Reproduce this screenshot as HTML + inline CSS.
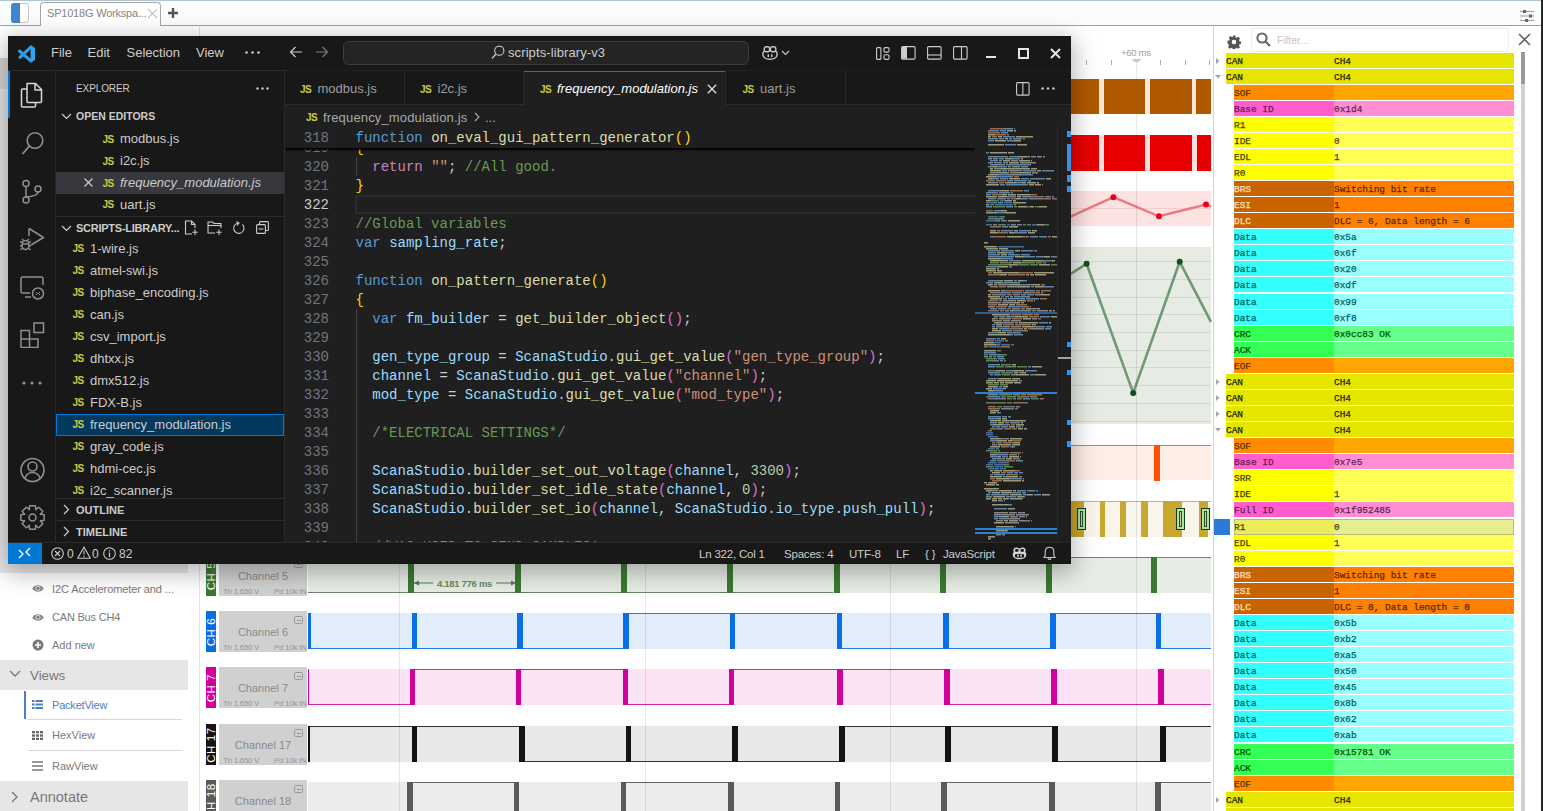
<!DOCTYPE html><html><head><meta charset="utf-8"><style>
html,body{margin:0;padding:0;width:1543px;height:811px;overflow:hidden;background:#fff;position:relative}
*{box-sizing:border-box}
.ab{position:absolute}
.t{position:absolute;white-space:nowrap;line-height:1}
</style></head><body>
<div class="ab" style="left:0;top:0;width:1543px;height:25px;background:#fbfcfd;border-top:1px solid #b0c4d8"></div>
<div class="ab" style="left:0;top:25px;width:1541px;height:1px;background:#a0a0a0"></div>
<div class="ab" style="left:11px;top:3px;width:18px;height:20px;border:1.5px solid #c4c4c4;border-radius:3px;background:#fff"></div>
<div class="ab" style="left:11px;top:3px;width:9px;height:20px;background:#3f86cf;border-radius:3px 0 0 3px"></div>
<div class="ab" style="left:40px;top:2px;width:121px;height:24px;background:#fff;border:1px solid #a8a8a8;border-bottom:none;border-radius:4px 4px 0 0"></div>
<div class="t" style="left:47px;top:7px;font:11px 'Liberation Sans',sans-serif;color:#858585;letter-spacing:-0.2px">SP1018G Workspa...</div>
<svg class="ab" style="left:147px;top:8px" width="11" height="11"><path d="M1 1L10 10M10 1L1 10" stroke="#c8c8c8" stroke-width="1.3"/></svg>
<svg class="ab" style="left:167px;top:7px" width="12" height="12"><path d="M6 1V11M1 6H11" stroke="#555" stroke-width="2.4"/></svg>
<svg class="ab" style="left:1519px;top:9px" width="16" height="14"><path d="M1 2.5H15M1 7H15M1 11.5H15" stroke="#999" stroke-width="1"/><rect x="4" y="1" width="3" height="3" fill="#666"/><rect x="10" y="5.5" width="3" height="3" fill="#666"/><rect x="6" y="10" width="3" height="3" fill="#666"/></svg>
<div class="ab" style="left:1541px;top:0;width:2px;height:811px;background:#28281e"></div>
<div class="ab" style="left:0;top:26px;width:199px;height:785px;background:#fff"></div>
<div class="ab" style="left:0;top:58px;width:8px;height:31px;background:#d6d6d6"></div>
<div class="ab" style="left:0;top:89px;width:8px;height:471px;background:#e4e4e4"></div>
<div class="ab" style="left:199px;top:26px;width:1px;height:785px;background:#e4e4e4"></div>
<div class="ab" style="left:0;top:545px;width:188px;height:28px;background:#e8e8e8"></div>
<svg class="ab" style="left:32px;top:584px" width="12" height="9"><path d="M0.3 4.5C2.5 0.3 9.5 0.3 11.7 4.5C9.5 8.7 2.5 8.7 0.3 4.5Z" fill="#8a8a8a"/><circle cx="6" cy="4.3" r="2.4" fill="#e8e8e8"/><circle cx="6" cy="4.3" r="1.5" fill="#777"/></svg>
<div class="t" style="left:52px;top:583px;font:11px 'Liberation Sans',sans-serif;color:#7a7a7a;letter-spacing:-0.1px">I2C Accelerometer and ...</div>
<svg class="ab" style="left:32px;top:613px" width="12" height="9"><path d="M0.3 4.5C2.5 0.3 9.5 0.3 11.7 4.5C9.5 8.7 2.5 8.7 0.3 4.5Z" fill="#8a8a8a"/><circle cx="6" cy="4.3" r="2.4" fill="#e8e8e8"/><circle cx="6" cy="4.3" r="1.5" fill="#777"/></svg>
<div class="t" style="left:52px;top:611px;font:11px 'Liberation Sans',sans-serif;color:#7a7a7a;letter-spacing:-0.2px">CAN Bus CH4</div>
<svg class="ab" style="left:32px;top:639px" width="12" height="12"><circle cx="6" cy="6" r="5.5" fill="#777"/><path d="M6 3V9M3 6H9" stroke="#fff" stroke-width="1.6"/></svg>
<div class="t" style="left:52px;top:639px;font:11px 'Liberation Sans',sans-serif;color:#7a7a7a">Add new</div>
<div class="ab" style="left:0;top:660px;width:188px;height:30px;background:#e6e6e6"></div>
<svg class="ab" style="left:9px;top:670px" width="12" height="8"><path d="M1 1L6 6L11 1" stroke="#777" stroke-width="1.3" fill="none"/></svg>
<div class="t" style="left:30px;top:668px;font:13.3px 'Liberation Sans',sans-serif;color:#777">Views</div>
<div class="ab" style="left:24px;top:691px;width:2px;height:28px;background:#4a80c0"></div>
<svg class="ab" style="left:32px;top:700px" width="11" height="9"><g fill="#4a7fc0"><rect x="0" y="0" width="2.5" height="2"/><rect x="3.5" y="0" width="7.5" height="2"/><rect x="0" y="3.5" width="2.5" height="2"/><rect x="3.5" y="3.5" width="7.5" height="2"/><rect x="0" y="7" width="2.5" height="2"/><rect x="3.5" y="7" width="7.5" height="2"/></g></svg>
<div class="t" style="left:52px;top:699px;font:11px 'Liberation Sans',sans-serif;color:#4b7fbd;letter-spacing:-0.2px">PacketView</div>
<div class="ab" style="left:28px;top:719px;width:154px;height:1px;background:#d8d8d8"></div>
<svg class="ab" style="left:32px;top:731px" width="11" height="9"><g fill="#666"><rect x="0" y="0" width="3" height="2.3"/><rect x="4" y="0" width="3" height="2.3"/><rect x="8" y="0" width="3" height="2.3"/><rect x="0" y="3.4" width="3" height="2.3"/><rect x="4" y="3.4" width="3" height="2.3"/><rect x="8" y="3.4" width="3" height="2.3"/><rect x="0" y="6.7" width="3" height="2.3"/><rect x="4" y="6.7" width="3" height="2.3"/><rect x="8" y="6.7" width="3" height="2.3"/></g></svg>
<div class="t" style="left:52px;top:729px;font:11px 'Liberation Sans',sans-serif;color:#7a7a7a">HexView</div>
<div class="ab" style="left:28px;top:750px;width:154px;height:1px;background:#d8d8d8"></div>
<svg class="ab" style="left:32px;top:761px" width="11" height="10"><path d="M0 1H11M0 5H11M0 9H11" stroke="#777" stroke-width="1.6"/></svg>
<div class="t" style="left:52px;top:760px;font:11px 'Liberation Sans',sans-serif;color:#7a7a7a">RawView</div>
<div class="ab" style="left:0;top:781px;width:188px;height:30px;background:#e6e6e6"></div>
<svg class="ab" style="left:11px;top:791px" width="8" height="12"><path d="M1 1L6 6L1 11" stroke="#777" stroke-width="1.3" fill="none"/></svg>
<div class="t" style="left:30px;top:789px;font:14.5px 'Liberation Sans',sans-serif;color:#777">Annotate</div>
<div class="ab" style="left:1213px;top:26px;width:1px;height:785px;background:#d4d4d4"></div>
<div class="t" style="left:1121px;top:47px;font:9.5px 'Liberation Sans',sans-serif;color:#9a9a9a;letter-spacing:-0.3px">+60 ms</div>
<div class="ab" style="left:1086px;top:60px;width:1px;height:5px;background:#aaa"></div>
<div class="ab" style="left:1111px;top:60px;width:1px;height:5px;background:#aaa"></div>
<div class="ab" style="left:1160px;top:60px;width:1px;height:5px;background:#aaa"></div>
<div class="ab" style="left:1185px;top:60px;width:1px;height:5px;background:#aaa"></div>
<div class="ab" style="left:1209px;top:60px;width:1px;height:5px;background:#aaa"></div>
<svg class="ab" style="left:1131px;top:59px" width="11" height="5"><path d="M0 0H11L5.5 4Z" fill="#c8c8c8"/></svg>
<div class="ab" style="left:1050px;top:79px;width:161px;height:35px;background:#fde7d6"></div>
<div class="ab" style="left:1050px;top:79px;width:49px;height:35px;background:#b05800"></div>
<div class="ab" style="left:1104px;top:79px;width:41px;height:35px;background:#b05800"></div>
<div class="ab" style="left:1150px;top:79px;width:42px;height:35px;background:#b05800"></div>
<div class="ab" style="left:1196px;top:79px;width:15px;height:35px;background:#b05800"></div>
<div class="ab" style="left:1050px;top:135px;width:161px;height:36px;background:#fde0de"></div>
<div class="ab" style="left:1050px;top:135px;width:49px;height:36px;background:#e80000"></div>
<div class="ab" style="left:1104px;top:135px;width:41px;height:36px;background:#e80000"></div>
<div class="ab" style="left:1150px;top:135px;width:42px;height:36px;background:#e80000"></div>
<div class="ab" style="left:1197px;top:135px;width:14px;height:36px;background:#e80000"></div>
<div class="ab" style="left:308px;top:191px;width:903px;height:35px;background:#fde2e2"></div>
<div class="ab" style="left:308px;top:208px;width:903px;height:1px;background:#f3cccc"></div>
<svg class="ab" style="left:1040px;top:185px" width="175" height="45"><polyline points="25,34.2 73.4,12.2 119,31.3 166,19.5 171,21.5" fill="none" stroke="#ea7a80" stroke-width="2.5"/><circle cx="73.4" cy="12.2" r="3" fill="#e8001a"/><circle cx="119" cy="31.3" r="3" fill="#e8001a"/><circle cx="166" cy="19.5" r="3" fill="#e8001a"/></svg>
<div class="ab" style="left:308px;top:247px;width:903px;height:177px;background:#e6ebe3"></div>
<div class="ab" style="left:308px;top:261px;width:903px;height:1px;background:#d2d8cf"></div>
<div class="ab" style="left:308px;top:279px;width:903px;height:1px;background:#d2d8cf"></div>
<div class="ab" style="left:308px;top:297px;width:903px;height:1px;background:#d2d8cf"></div>
<div class="ab" style="left:308px;top:314px;width:903px;height:1px;background:#d2d8cf"></div>
<div class="ab" style="left:308px;top:332px;width:903px;height:1px;background:#d2d8cf"></div>
<div class="ab" style="left:308px;top:350px;width:903px;height:1px;background:#d2d8cf"></div>
<div class="ab" style="left:308px;top:367px;width:903px;height:1px;background:#d2d8cf"></div>
<div class="ab" style="left:308px;top:385px;width:903px;height:1px;background:#d2d8cf"></div>
<div class="ab" style="left:308px;top:403px;width:903px;height:1px;background:#d2d8cf"></div>
<div class="ab" style="left:308px;top:421px;width:903px;height:1px;background:#d2d8cf"></div>
<svg class="ab" style="left:1040px;top:240px" width="175" height="180"><polyline points="0,53.6 46.6,23.7 93.2,153 139.7,21.8 171,81.8" fill="none" stroke="#709a72" stroke-width="2.6"/><circle cx="46.6" cy="23.7" r="3" fill="#10501e"/><circle cx="93.2" cy="153" r="3" fill="#10501e"/><circle cx="139.7" cy="21.8" r="3" fill="#10501e"/></svg>
<div class="ab" style="left:308px;top:445px;width:903px;height:35px;background:#fdede4"></div>
<div class="ab" style="left:308px;top:445px;width:903px;height:1px;background:#f07838"></div>
<div class="ab" style="left:1154px;top:445px;width:6px;height:36px;background:#ff5000"></div>
<div class="ab" style="left:308px;top:501px;width:903px;height:36px;background:#f9f5ea"></div>
<div class="ab" style="left:308px;top:501px;width:903px;height:1px;background:#bdb28a"></div>
<div class="ab" style="left:1050px;top:501px;width:34px;height:36px;background:#c8a72e"></div>
<div class="ab" style="left:1100px;top:501px;width:5px;height:36px;background:#c8a72e"></div>
<div class="ab" style="left:1120px;top:501px;width:6px;height:36px;background:#c8a72e"></div>
<div class="ab" style="left:1141px;top:501px;width:7px;height:36px;background:#c8a72e"></div>
<div class="ab" style="left:1163px;top:501px;width:19px;height:36px;background:#c8a72e"></div>
<div class="ab" style="left:1199px;top:501px;width:9px;height:36px;background:#c8a72e"></div>
<div class="ab" style="left:1077px;top:508px;width:9px;height:22px;border:1.5px solid #123d12;background:#a8e6a0"></div>
<div class="ab" style="left:1080px;top:511px;width:3px;height:16px;border:1px solid #2a4a2a;background:#d8c8a0"></div>
<div class="ab" style="left:1176px;top:508px;width:9px;height:22px;border:1.5px solid #123d12;background:#a8e6a0"></div>
<div class="ab" style="left:1179px;top:511px;width:3px;height:16px;border:1px solid #2a4a2a;background:#d8c8a0"></div>
<div class="ab" style="left:1201px;top:508px;width:9px;height:22px;border:1.5px solid #123d12;background:#a8e6a0"></div>
<div class="ab" style="left:1204px;top:511px;width:3px;height:16px;border:1px solid #2a4a2a;background:#d8c8a0"></div>
<div class="ab" style="left:206px;top:555px;width:10px;height:41px;background:#3a7a30;overflow:hidden"><div class="t" style="left:-16px;top:14.5px;width:42px;text-align:center;transform:rotate(-90deg);font:11.5px 'Liberation Sans',sans-serif;color:#fff;letter-spacing:0.6px">CH 5</div></div>
<div class="ab" style="left:219px;top:555px;width:88px;height:41px;background:#d0d0d0;overflow:hidden"><div class="t" style="left:0;width:88px;text-align:center;top:15px;font:11px 'Liberation Sans',sans-serif;color:#8a8a8a">Channel 5</div><div class="t" style="left:4px;top:32px;font:8px 'Liberation Sans',sans-serif;color:#999;letter-spacing:-0.3px">Th 1.650 V</div><div class="t" style="left:55px;top:32px;font:8px 'Liberation Sans',sans-serif;color:#999;letter-spacing:-0.3px">Pd 10k IN</div><div class="ab" style="left:75px;top:5px;width:9px;height:8px;border:1px solid #999;border-radius:1.5px"><div class="ab" style="left:1.5px;top:3px;width:4px;height:1px;background:#999"></div></div></div>
<div class="ab" style="left:308px;top:557px;width:903px;height:36px;background:#e7ece5"></div>
<div class="ab" style="left:308px;top:592px;width:99.80000000000001px;height:1.2px;background:#6f806d"></div>
<div class="ab" style="left:407.8px;top:592px;width:107.49999999999994px;height:1.2px;background:#6f806d"></div>
<div class="ab" style="left:515.3px;top:592px;width:105.60000000000002px;height:1.2px;background:#6f806d"></div>
<div class="ab" style="left:620.9px;top:592px;width:106.30000000000007px;height:1.2px;background:#6f806d"></div>
<div class="ab" style="left:727.2px;top:592px;width:106.29999999999995px;height:1.2px;background:#6f806d"></div>
<div class="ab" style="left:833.5px;top:557px;width:106.5px;height:1.2px;background:#6f806d"></div>
<div class="ab" style="left:940px;top:557px;width:106.29999999999995px;height:1.2px;background:#6f806d"></div>
<div class="ab" style="left:1046.3px;top:557px;width:104.5px;height:1.2px;background:#6f806d"></div>
<div class="ab" style="left:1150.8px;top:557px;width:60.200000000000045px;height:1.2px;background:#6f806d"></div>
<div class="ab" style="left:407.8px;top:557px;width:6px;height:36px;background:#3a7a30"></div>
<div class="ab" style="left:515.3px;top:557px;width:6px;height:36px;background:#3a7a30"></div>
<div class="ab" style="left:620.9px;top:557px;width:6px;height:36px;background:#3a7a30"></div>
<div class="ab" style="left:727.2px;top:557px;width:6px;height:36px;background:#3a7a30"></div>
<div class="ab" style="left:833.5px;top:557px;width:6px;height:36px;background:#3a7a30"></div>
<div class="ab" style="left:940px;top:557px;width:6px;height:36px;background:#3a7a30"></div>
<div class="ab" style="left:1046.3px;top:557px;width:6px;height:36px;background:#3a7a30"></div>
<div class="ab" style="left:1150.8px;top:557px;width:6px;height:36px;background:#3a7a30"></div>
<div class="ab" style="left:206px;top:611px;width:10px;height:41px;background:#0a6ee6;overflow:hidden"><div class="t" style="left:-16px;top:14.5px;width:42px;text-align:center;transform:rotate(-90deg);font:11.5px 'Liberation Sans',sans-serif;color:#fff;letter-spacing:0.6px">CH 6</div></div>
<div class="ab" style="left:219px;top:611px;width:88px;height:41px;background:#d0d0d0;overflow:hidden"><div class="t" style="left:0;width:88px;text-align:center;top:15px;font:11px 'Liberation Sans',sans-serif;color:#8a8a8a">Channel 6</div><div class="t" style="left:4px;top:32px;font:8px 'Liberation Sans',sans-serif;color:#999;letter-spacing:-0.3px">Th 1.650 V</div><div class="t" style="left:55px;top:32px;font:8px 'Liberation Sans',sans-serif;color:#999;letter-spacing:-0.3px">Pd 10k IN</div><div class="ab" style="left:75px;top:5px;width:9px;height:8px;border:1px solid #999;border-radius:1.5px"><div class="ab" style="left:1.5px;top:3px;width:4px;height:1px;background:#999"></div></div></div>
<div class="ab" style="left:308px;top:613px;width:903px;height:36px;background:#e2edfb"></div>
<div class="ab" style="left:308px;top:648px;width:103.5px;height:1.2px;background:#2b7de0"></div>
<div class="ab" style="left:411.5px;top:648px;width:105.79999999999995px;height:1.2px;background:#2b7de0"></div>
<div class="ab" style="left:517.3px;top:648px;width:105.70000000000005px;height:1.2px;background:#2b7de0"></div>
<div class="ab" style="left:623px;top:613px;width:106.60000000000002px;height:1.2px;background:#2b7de0"></div>
<div class="ab" style="left:729.6px;top:613px;width:106.89999999999998px;height:1.2px;background:#2b7de0"></div>
<div class="ab" style="left:836.5px;top:648px;width:106.5px;height:1.2px;background:#2b7de0"></div>
<div class="ab" style="left:943px;top:648px;width:107px;height:1.2px;background:#2b7de0"></div>
<div class="ab" style="left:1050px;top:613px;width:105.5px;height:1.2px;background:#2b7de0"></div>
<div class="ab" style="left:1155.5px;top:648px;width:55.5px;height:1.2px;background:#2b7de0"></div>
<div class="ab" style="left:411.5px;top:613px;width:5.5px;height:36px;background:#0a6ee6"></div>
<div class="ab" style="left:517.3px;top:613px;width:5.5px;height:36px;background:#0a6ee6"></div>
<div class="ab" style="left:623px;top:613px;width:5.5px;height:36px;background:#0a6ee6"></div>
<div class="ab" style="left:729.6px;top:613px;width:5.5px;height:36px;background:#0a6ee6"></div>
<div class="ab" style="left:836.5px;top:613px;width:5.5px;height:36px;background:#0a6ee6"></div>
<div class="ab" style="left:943px;top:613px;width:5.5px;height:36px;background:#0a6ee6"></div>
<div class="ab" style="left:1050px;top:613px;width:5.5px;height:36px;background:#0a6ee6"></div>
<div class="ab" style="left:1155.5px;top:613px;width:5.5px;height:36px;background:#0a6ee6"></div>
<div class="ab" style="left:308px;top:613px;width:3px;height:36px;background:#0a6ee6"></div>
<div class="ab" style="left:206px;top:667px;width:10px;height:41px;background:#d2009f;overflow:hidden"><div class="t" style="left:-16px;top:14.5px;width:42px;text-align:center;transform:rotate(-90deg);font:11.5px 'Liberation Sans',sans-serif;color:#fff;letter-spacing:0.6px">CH 7</div></div>
<div class="ab" style="left:219px;top:667px;width:88px;height:41px;background:#d0d0d0;overflow:hidden"><div class="t" style="left:0;width:88px;text-align:center;top:15px;font:11px 'Liberation Sans',sans-serif;color:#8a8a8a">Channel 7</div><div class="t" style="left:4px;top:32px;font:8px 'Liberation Sans',sans-serif;color:#999;letter-spacing:-0.3px">Th 1.650 V</div><div class="t" style="left:55px;top:32px;font:8px 'Liberation Sans',sans-serif;color:#999;letter-spacing:-0.3px">Pd 10k IN</div><div class="ab" style="left:75px;top:5px;width:9px;height:8px;border:1px solid #999;border-radius:1.5px"><div class="ab" style="left:1.5px;top:3px;width:4px;height:1px;background:#999"></div></div></div>
<div class="ab" style="left:308px;top:669px;width:903px;height:36px;background:#fae3f5"></div>
<div class="ab" style="left:308px;top:704px;width:101.5px;height:1.2px;background:#cf27a7"></div>
<div class="ab" style="left:409.5px;top:669px;width:106.0px;height:1.2px;background:#cf27a7"></div>
<div class="ab" style="left:515.5px;top:669px;width:107.0px;height:1.2px;background:#cf27a7"></div>
<div class="ab" style="left:622.5px;top:704px;width:106.79999999999995px;height:1.2px;background:#cf27a7"></div>
<div class="ab" style="left:729.3px;top:669px;width:108.10000000000002px;height:1.2px;background:#cf27a7"></div>
<div class="ab" style="left:837.4px;top:669px;width:107.0px;height:1.2px;background:#cf27a7"></div>
<div class="ab" style="left:944.4px;top:704px;width:107.00000000000011px;height:1.2px;background:#cf27a7"></div>
<div class="ab" style="left:1051.4px;top:704px;width:107.0px;height:1.2px;background:#cf27a7"></div>
<div class="ab" style="left:1158.4px;top:704px;width:52.59999999999991px;height:1.2px;background:#cf27a7"></div>
<div class="ab" style="left:409.5px;top:669px;width:5.2px;height:36px;background:#d2009f"></div>
<div class="ab" style="left:515.5px;top:669px;width:5.2px;height:36px;background:#d2009f"></div>
<div class="ab" style="left:622.5px;top:669px;width:5.2px;height:36px;background:#d2009f"></div>
<div class="ab" style="left:729.3px;top:669px;width:5.2px;height:36px;background:#d2009f"></div>
<div class="ab" style="left:837.4px;top:669px;width:5.2px;height:36px;background:#d2009f"></div>
<div class="ab" style="left:944.4px;top:669px;width:5.2px;height:36px;background:#d2009f"></div>
<div class="ab" style="left:1051.4px;top:669px;width:5.2px;height:36px;background:#d2009f"></div>
<div class="ab" style="left:1158.4px;top:669px;width:5.2px;height:36px;background:#d2009f"></div>
<div class="ab" style="left:308px;top:669px;width:1.2px;height:36px;background:#d2009f"></div>
<div class="ab" style="left:206px;top:724px;width:10px;height:41px;background:#141414;overflow:hidden"><div class="t" style="left:-16px;top:14.5px;width:42px;text-align:center;transform:rotate(-90deg);font:11.5px 'Liberation Sans',sans-serif;color:#fff;letter-spacing:0.6px">CH 17</div></div>
<div class="ab" style="left:219px;top:724px;width:88px;height:41px;background:#d0d0d0;overflow:hidden"><div class="t" style="left:0;width:88px;text-align:center;top:15px;font:11px 'Liberation Sans',sans-serif;color:#8a8a8a">Channel 17</div><div class="t" style="left:4px;top:32px;font:8px 'Liberation Sans',sans-serif;color:#999;letter-spacing:-0.3px">Th 1.650 V</div><div class="t" style="left:55px;top:32px;font:8px 'Liberation Sans',sans-serif;color:#999;letter-spacing:-0.3px">Pd 10k IN</div><div class="ab" style="left:75px;top:5px;width:9px;height:8px;border:1px solid #999;border-radius:1.5px"><div class="ab" style="left:1.5px;top:3px;width:4px;height:1px;background:#999"></div></div></div>
<div class="ab" style="left:308px;top:726px;width:903px;height:36px;background:#e8e8e8"></div>
<div class="ab" style="left:308px;top:726px;width:103.5px;height:1.2px;background:#333"></div>
<div class="ab" style="left:411.5px;top:726px;width:107.5px;height:1.2px;background:#333"></div>
<div class="ab" style="left:519px;top:761px;width:106.60000000000002px;height:1.2px;background:#333"></div>
<div class="ab" style="left:625.6px;top:761px;width:106.69999999999993px;height:1.2px;background:#333"></div>
<div class="ab" style="left:732.3px;top:761px;width:106.60000000000002px;height:1.2px;background:#333"></div>
<div class="ab" style="left:838.9px;top:726px;width:106.39999999999998px;height:1.2px;background:#333"></div>
<div class="ab" style="left:945.3px;top:726px;width:107.0px;height:1.2px;background:#333"></div>
<div class="ab" style="left:1052.3px;top:761px;width:107.60000000000014px;height:1.2px;background:#333"></div>
<div class="ab" style="left:1159.9px;top:726px;width:51.09999999999991px;height:1.2px;background:#333"></div>
<div class="ab" style="left:411.5px;top:726px;width:5.7px;height:36px;background:#141414"></div>
<div class="ab" style="left:519px;top:726px;width:5.7px;height:36px;background:#141414"></div>
<div class="ab" style="left:625.6px;top:726px;width:5.7px;height:36px;background:#141414"></div>
<div class="ab" style="left:732.3px;top:726px;width:5.7px;height:36px;background:#141414"></div>
<div class="ab" style="left:838.9px;top:726px;width:5.7px;height:36px;background:#141414"></div>
<div class="ab" style="left:945.3px;top:726px;width:5.7px;height:36px;background:#141414"></div>
<div class="ab" style="left:1052.3px;top:726px;width:5.7px;height:36px;background:#141414"></div>
<div class="ab" style="left:1159.9px;top:726px;width:5.7px;height:36px;background:#141414"></div>
<div class="ab" style="left:308px;top:726px;width:1.5px;height:36px;background:#141414"></div>
<div class="ab" style="left:206px;top:780px;width:10px;height:41px;background:#5a5a5a;overflow:hidden"><div class="t" style="left:-16px;top:14.5px;width:42px;text-align:center;transform:rotate(-90deg);font:11.5px 'Liberation Sans',sans-serif;color:#fff;letter-spacing:0.6px">CH 18</div></div>
<div class="ab" style="left:219px;top:780px;width:88px;height:41px;background:#d0d0d0;overflow:hidden"><div class="t" style="left:0;width:88px;text-align:center;top:15px;font:11px 'Liberation Sans',sans-serif;color:#8a8a8a">Channel 18</div><div class="t" style="left:4px;top:32px;font:8px 'Liberation Sans',sans-serif;color:#999;letter-spacing:-0.3px">Th 1.650 V</div><div class="t" style="left:55px;top:32px;font:8px 'Liberation Sans',sans-serif;color:#999;letter-spacing:-0.3px">Pd 10k IN</div><div class="ab" style="left:75px;top:5px;width:9px;height:8px;border:1px solid #999;border-radius:1.5px"><div class="ab" style="left:1.5px;top:3px;width:4px;height:1px;background:#999"></div></div></div>
<div class="ab" style="left:308px;top:782px;width:903px;height:36px;background:#ececec"></div>
<div class="ab" style="left:308px;top:817px;width:99.30000000000001px;height:1.2px;background:#666"></div>
<div class="ab" style="left:407.3px;top:782px;width:106.49999999999994px;height:1.2px;background:#666"></div>
<div class="ab" style="left:513.8px;top:817px;width:107.30000000000007px;height:1.2px;background:#666"></div>
<div class="ab" style="left:621.1px;top:782px;width:107.29999999999995px;height:1.2px;background:#666"></div>
<div class="ab" style="left:728.4px;top:817px;width:106.60000000000002px;height:1.2px;background:#666"></div>
<div class="ab" style="left:835px;top:817px;width:106.39999999999998px;height:1.2px;background:#666"></div>
<div class="ab" style="left:941.4px;top:782px;width:107.89999999999998px;height:1.2px;background:#666"></div>
<div class="ab" style="left:1049.3px;top:817px;width:106.10000000000014px;height:1.2px;background:#666"></div>
<div class="ab" style="left:1155.4px;top:782px;width:55.59999999999991px;height:1.2px;background:#666"></div>
<div class="ab" style="left:407.3px;top:782px;width:5.4px;height:36px;background:#5a5a5a"></div>
<div class="ab" style="left:513.8px;top:782px;width:5.4px;height:36px;background:#5a5a5a"></div>
<div class="ab" style="left:621.1px;top:782px;width:5.4px;height:36px;background:#5a5a5a"></div>
<div class="ab" style="left:728.4px;top:782px;width:5.4px;height:36px;background:#5a5a5a"></div>
<div class="ab" style="left:835px;top:782px;width:5.4px;height:36px;background:#5a5a5a"></div>
<div class="ab" style="left:941.4px;top:782px;width:5.4px;height:36px;background:#5a5a5a"></div>
<div class="ab" style="left:1049.3px;top:782px;width:5.4px;height:36px;background:#5a5a5a"></div>
<div class="ab" style="left:1155.4px;top:782px;width:5.4px;height:36px;background:#5a5a5a"></div>
<div class="ab" style="left:399px;top:64px;width:1px;height:15px;background:rgba(0,0,0,0.09)"></div>
<div class="ab" style="left:399px;top:114px;width:1px;height:21px;background:rgba(0,0,0,0.09)"></div>
<div class="ab" style="left:399px;top:171px;width:1px;height:640px;background:rgba(0,0,0,0.09)"></div>
<div class="ab" style="left:645px;top:64px;width:1px;height:15px;background:rgba(0,0,0,0.09)"></div>
<div class="ab" style="left:645px;top:114px;width:1px;height:21px;background:rgba(0,0,0,0.09)"></div>
<div class="ab" style="left:645px;top:171px;width:1px;height:640px;background:rgba(0,0,0,0.09)"></div>
<div class="ab" style="left:890px;top:64px;width:1px;height:15px;background:rgba(0,0,0,0.09)"></div>
<div class="ab" style="left:890px;top:114px;width:1px;height:21px;background:rgba(0,0,0,0.09)"></div>
<div class="ab" style="left:890px;top:171px;width:1px;height:640px;background:rgba(0,0,0,0.09)"></div>
<div class="ab" style="left:1136px;top:64px;width:1px;height:15px;background:rgba(0,0,0,0.09)"></div>
<div class="ab" style="left:1136px;top:114px;width:1px;height:21px;background:rgba(0,0,0,0.09)"></div>
<div class="ab" style="left:1136px;top:171px;width:1px;height:640px;background:rgba(0,0,0,0.09)"></div>
<svg class="ab" style="left:413px;top:578px" width="104" height="10"><path d="M1 5H20M83 5H103" stroke="#4d7a4d" stroke-width="1"/><path d="M1 5L6 2.5V7.5Z M103 5L98 2.5V7.5Z" fill="#4d7a4d"/></svg>
<div class="t" style="left:437px;top:578px;font:bold 9.5px 'Liberation Sans',sans-serif;color:#668a66;letter-spacing:-0.3px">4.181 776 ms</div>
<div class="ab" style="left:1214px;top:26px;width:327px;height:785px;background:#fff"></div>
<svg class="ab" style="left:1227px;top:34.5px" width="14" height="14" viewBox="0 0 16 16"><path fill="#555" d="M6.6 0.5h2.8l0.4 2.1 1.3 0.6 1.8-1.2 2 2-1.2 1.8 0.6 1.3 2.1 0.4v2.8l-2.1 0.4-0.6 1.3 1.2 1.8-2 2-1.8-1.2-1.3 0.6-0.4 2.1H6.6l-0.4-2.1-1.3-0.6-1.8 1.2-2-2 1.2-1.8-0.6-1.3L0.5 9.4V6.6l2.1-0.4 0.6-1.3L2 3.1l2-2 1.8 1.2 1.3-0.6z"/><circle cx="8" cy="8" r="2.6" fill="#fff"/></svg>
<div class="ab" style="left:1251px;top:28px;width:258px;height:24px;border:1px solid #eeeeee;border-radius:2px;background:#fff"></div>
<svg class="ab" style="left:1256px;top:32px" width="15" height="15"><circle cx="6" cy="6" r="4.6" stroke="#666" stroke-width="2" fill="none"/><path d="M9.5 9.5L14 14" stroke="#666" stroke-width="2.2"/></svg>
<div class="t" style="left:1277px;top:34px;font:10.5px 'Liberation Sans',sans-serif;color:#c4c4c4">Filter...</div>
<svg class="ab" style="left:1518px;top:33px" width="13" height="13"><path d="M1 1L12 12M12 1L1 12" stroke="#666" stroke-width="1.6"/></svg>
<div class="ab" style="left:1521px;top:52px;width:4px;height:759px;background:#d0d0d0"></div>
<div class="ab" style="left:1521px;top:52px;width:4px;height:32px;background:#999"></div>
<svg class="ab" style="left:1216px;top:57.50px" width="7" height="7"><path d="M0 0L3.5 3L0 6Z" fill="#a4a4b0"/></svg>
<div class="ab" style="left:1226px;top:52.50px;width:108px;height:15px;background:#e5e500"></div>
<div class="ab" style="left:1334px;top:52.50px;width:180px;height:15px;background:#e5e500"></div>
<div class="t" style="left:1226px;top:55.50px;font:9.45px 'Liberation Mono',monospace;color:#1e1e00;-webkit-text-stroke:0.25px #1e1e00">CAN</div>
<div class="t" style="left:1334px;top:55.50px;font:9.45px 'Liberation Mono',monospace;color:#1e1e00;-webkit-text-stroke:0.25px #1e1e00">CH4</div>
<svg class="ab" style="left:1215px;top:74.57px" width="7" height="7"><path d="M0 0H6L3 3.5Z" fill="#a4a4b0"/></svg>
<div class="ab" style="left:1226px;top:68.57px;width:108px;height:15px;background:#e5e500"></div>
<div class="ab" style="left:1334px;top:68.57px;width:180px;height:15px;background:#e5e500"></div>
<div class="t" style="left:1226px;top:71.57px;font:9.45px 'Liberation Mono',monospace;color:#1e1e00;-webkit-text-stroke:0.25px #1e1e00">CAN</div>
<div class="t" style="left:1334px;top:71.57px;font:9.45px 'Liberation Mono',monospace;color:#1e1e00;-webkit-text-stroke:0.25px #1e1e00">CH4</div>
<div class="ab" style="left:1234px;top:84.64px;width:100px;height:15px;background:#ff8c00"></div>
<div class="ab" style="left:1334px;top:84.64px;width:180px;height:15px;background:#ffa500"></div>
<div class="t" style="left:1234px;top:87.64px;font:9.45px 'Liberation Mono',monospace;color:#553300;-webkit-text-stroke:0.25px #553300">SOF</div>
<div class="ab" style="left:1234px;top:100.71px;width:100px;height:15px;background:#ff5ccc"></div>
<div class="ab" style="left:1334px;top:100.71px;width:180px;height:15px;background:#ff8fd2"></div>
<div class="t" style="left:1234px;top:103.71px;font:9.45px 'Liberation Mono',monospace;color:#661f55;-webkit-text-stroke:0.25px #661f55">Base ID</div>
<div class="t" style="left:1334px;top:103.71px;font:9.45px 'Liberation Mono',monospace;color:#661f55;-webkit-text-stroke:0.25px #661f55">0x1d4</div>
<div class="ab" style="left:1234px;top:116.78px;width:100px;height:15px;background:#ffff00"></div>
<div class="ab" style="left:1334px;top:116.78px;width:180px;height:15px;background:#ffff55"></div>
<div class="t" style="left:1234px;top:119.78px;font:9.45px 'Liberation Mono',monospace;color:#444400;-webkit-text-stroke:0.25px #444400">R1</div>
<div class="ab" style="left:1234px;top:132.85px;width:100px;height:15px;background:#ffff00"></div>
<div class="ab" style="left:1334px;top:132.85px;width:180px;height:15px;background:#ffff55"></div>
<div class="t" style="left:1234px;top:135.85px;font:9.45px 'Liberation Mono',monospace;color:#444400;-webkit-text-stroke:0.25px #444400">IDE</div>
<div class="t" style="left:1334px;top:135.85px;font:9.45px 'Liberation Mono',monospace;color:#444400;-webkit-text-stroke:0.25px #444400">0</div>
<div class="ab" style="left:1234px;top:148.92px;width:100px;height:15px;background:#ffff00"></div>
<div class="ab" style="left:1334px;top:148.92px;width:180px;height:15px;background:#ffff55"></div>
<div class="t" style="left:1234px;top:151.92px;font:9.45px 'Liberation Mono',monospace;color:#444400;-webkit-text-stroke:0.25px #444400">EDL</div>
<div class="t" style="left:1334px;top:151.92px;font:9.45px 'Liberation Mono',monospace;color:#444400;-webkit-text-stroke:0.25px #444400">1</div>
<div class="ab" style="left:1234px;top:164.99px;width:100px;height:15px;background:#ffff00"></div>
<div class="ab" style="left:1334px;top:164.99px;width:180px;height:15px;background:#ffff55"></div>
<div class="t" style="left:1234px;top:167.99px;font:9.45px 'Liberation Mono',monospace;color:#444400;-webkit-text-stroke:0.25px #444400">R0</div>
<div class="ab" style="left:1234px;top:181.06px;width:100px;height:15px;background:#c86400"></div>
<div class="ab" style="left:1334px;top:181.06px;width:180px;height:15px;background:#ff8000"></div>
<div class="t" style="left:1234px;top:184.06px;font:9.45px 'Liberation Mono',monospace;color:#ffe0c0;-webkit-text-stroke:0.25px #ffe0c0">BRS</div>
<div class="t" style="left:1334px;top:184.06px;font:9.45px 'Liberation Mono',monospace;color:#5a2a00;-webkit-text-stroke:0.25px #5a2a00">Switching bit rate</div>
<div class="ab" style="left:1234px;top:197.13px;width:100px;height:15px;background:#c86400"></div>
<div class="ab" style="left:1334px;top:197.13px;width:180px;height:15px;background:#ff8000"></div>
<div class="t" style="left:1234px;top:200.13px;font:9.45px 'Liberation Mono',monospace;color:#ffe0c0;-webkit-text-stroke:0.25px #ffe0c0">ESI</div>
<div class="t" style="left:1334px;top:200.13px;font:9.45px 'Liberation Mono',monospace;color:#5a2a00;-webkit-text-stroke:0.25px #5a2a00">1</div>
<div class="ab" style="left:1234px;top:213.20px;width:100px;height:15px;background:#c86400"></div>
<div class="ab" style="left:1334px;top:213.20px;width:180px;height:15px;background:#ff8000"></div>
<div class="t" style="left:1234px;top:216.20px;font:9.45px 'Liberation Mono',monospace;color:#ffe0c0;-webkit-text-stroke:0.25px #ffe0c0">DLC</div>
<div class="t" style="left:1334px;top:216.20px;font:9.45px 'Liberation Mono',monospace;color:#5a2a00;-webkit-text-stroke:0.25px #5a2a00">DLC = 6, Data length = 6</div>
<div class="ab" style="left:1234px;top:229.27px;width:100px;height:15px;background:#33ffff"></div>
<div class="ab" style="left:1334px;top:229.27px;width:180px;height:15px;background:#99ffff"></div>
<div class="t" style="left:1234px;top:232.27px;font:9.45px 'Liberation Mono',monospace;color:#005f5f;-webkit-text-stroke:0.25px #005f5f">Data</div>
<div class="t" style="left:1334px;top:232.27px;font:9.45px 'Liberation Mono',monospace;color:#005f5f;-webkit-text-stroke:0.25px #005f5f">0x5a</div>
<div class="ab" style="left:1234px;top:245.34px;width:100px;height:15px;background:#33ffff"></div>
<div class="ab" style="left:1334px;top:245.34px;width:180px;height:15px;background:#99ffff"></div>
<div class="t" style="left:1234px;top:248.34px;font:9.45px 'Liberation Mono',monospace;color:#005f5f;-webkit-text-stroke:0.25px #005f5f">Data</div>
<div class="t" style="left:1334px;top:248.34px;font:9.45px 'Liberation Mono',monospace;color:#005f5f;-webkit-text-stroke:0.25px #005f5f">0x6f</div>
<div class="ab" style="left:1234px;top:261.41px;width:100px;height:15px;background:#33ffff"></div>
<div class="ab" style="left:1334px;top:261.41px;width:180px;height:15px;background:#99ffff"></div>
<div class="t" style="left:1234px;top:264.41px;font:9.45px 'Liberation Mono',monospace;color:#005f5f;-webkit-text-stroke:0.25px #005f5f">Data</div>
<div class="t" style="left:1334px;top:264.41px;font:9.45px 'Liberation Mono',monospace;color:#005f5f;-webkit-text-stroke:0.25px #005f5f">0x20</div>
<div class="ab" style="left:1234px;top:277.48px;width:100px;height:15px;background:#33ffff"></div>
<div class="ab" style="left:1334px;top:277.48px;width:180px;height:15px;background:#99ffff"></div>
<div class="t" style="left:1234px;top:280.48px;font:9.45px 'Liberation Mono',monospace;color:#005f5f;-webkit-text-stroke:0.25px #005f5f">Data</div>
<div class="t" style="left:1334px;top:280.48px;font:9.45px 'Liberation Mono',monospace;color:#005f5f;-webkit-text-stroke:0.25px #005f5f">0xdf</div>
<div class="ab" style="left:1234px;top:293.55px;width:100px;height:15px;background:#33ffff"></div>
<div class="ab" style="left:1334px;top:293.55px;width:180px;height:15px;background:#99ffff"></div>
<div class="t" style="left:1234px;top:296.55px;font:9.45px 'Liberation Mono',monospace;color:#005f5f;-webkit-text-stroke:0.25px #005f5f">Data</div>
<div class="t" style="left:1334px;top:296.55px;font:9.45px 'Liberation Mono',monospace;color:#005f5f;-webkit-text-stroke:0.25px #005f5f">0x99</div>
<div class="ab" style="left:1234px;top:309.62px;width:100px;height:15px;background:#33ffff"></div>
<div class="ab" style="left:1334px;top:309.62px;width:180px;height:15px;background:#99ffff"></div>
<div class="t" style="left:1234px;top:312.62px;font:9.45px 'Liberation Mono',monospace;color:#005f5f;-webkit-text-stroke:0.25px #005f5f">Data</div>
<div class="t" style="left:1334px;top:312.62px;font:9.45px 'Liberation Mono',monospace;color:#005f5f;-webkit-text-stroke:0.25px #005f5f">0xf8</div>
<div class="ab" style="left:1234px;top:325.69px;width:100px;height:15px;background:#33ff55"></div>
<div class="ab" style="left:1334px;top:325.69px;width:180px;height:15px;background:#66ff8c"></div>
<div class="t" style="left:1234px;top:328.69px;font:9.45px 'Liberation Mono',monospace;color:#005500;-webkit-text-stroke:0.25px #005500">CRC</div>
<div class="t" style="left:1334px;top:328.69px;font:9.45px 'Liberation Mono',monospace;color:#005500;-webkit-text-stroke:0.25px #005500">0x0cc83 OK</div>
<div class="ab" style="left:1234px;top:341.76px;width:100px;height:15px;background:#33ff55"></div>
<div class="ab" style="left:1334px;top:341.76px;width:180px;height:15px;background:#66ff8c"></div>
<div class="t" style="left:1234px;top:344.76px;font:9.45px 'Liberation Mono',monospace;color:#005500;-webkit-text-stroke:0.25px #005500">ACK</div>
<div class="ab" style="left:1234px;top:357.83px;width:100px;height:15px;background:#ff8c00"></div>
<div class="ab" style="left:1334px;top:357.83px;width:180px;height:15px;background:#ffa500"></div>
<div class="t" style="left:1234px;top:360.83px;font:9.45px 'Liberation Mono',monospace;color:#553300;-webkit-text-stroke:0.25px #553300">EOF</div>
<svg class="ab" style="left:1216px;top:378.90px" width="7" height="7"><path d="M0 0L3.5 3L0 6Z" fill="#a4a4b0"/></svg>
<div class="ab" style="left:1226px;top:373.90px;width:108px;height:15px;background:#e5e500"></div>
<div class="ab" style="left:1334px;top:373.90px;width:180px;height:15px;background:#e5e500"></div>
<div class="t" style="left:1226px;top:376.90px;font:9.45px 'Liberation Mono',monospace;color:#1e1e00;-webkit-text-stroke:0.25px #1e1e00">CAN</div>
<div class="t" style="left:1334px;top:376.90px;font:9.45px 'Liberation Mono',monospace;color:#1e1e00;-webkit-text-stroke:0.25px #1e1e00">CH4</div>
<svg class="ab" style="left:1216px;top:394.97px" width="7" height="7"><path d="M0 0L3.5 3L0 6Z" fill="#a4a4b0"/></svg>
<div class="ab" style="left:1226px;top:389.97px;width:108px;height:15px;background:#e5e500"></div>
<div class="ab" style="left:1334px;top:389.97px;width:180px;height:15px;background:#e5e500"></div>
<div class="t" style="left:1226px;top:392.97px;font:9.45px 'Liberation Mono',monospace;color:#1e1e00;-webkit-text-stroke:0.25px #1e1e00">CAN</div>
<div class="t" style="left:1334px;top:392.97px;font:9.45px 'Liberation Mono',monospace;color:#1e1e00;-webkit-text-stroke:0.25px #1e1e00">CH4</div>
<svg class="ab" style="left:1216px;top:411.04px" width="7" height="7"><path d="M0 0L3.5 3L0 6Z" fill="#a4a4b0"/></svg>
<div class="ab" style="left:1226px;top:406.04px;width:108px;height:15px;background:#e5e500"></div>
<div class="ab" style="left:1334px;top:406.04px;width:180px;height:15px;background:#e5e500"></div>
<div class="t" style="left:1226px;top:409.04px;font:9.45px 'Liberation Mono',monospace;color:#1e1e00;-webkit-text-stroke:0.25px #1e1e00">CAN</div>
<div class="t" style="left:1334px;top:409.04px;font:9.45px 'Liberation Mono',monospace;color:#1e1e00;-webkit-text-stroke:0.25px #1e1e00">CH4</div>
<svg class="ab" style="left:1215px;top:428.11px" width="7" height="7"><path d="M0 0H6L3 3.5Z" fill="#a4a4b0"/></svg>
<div class="ab" style="left:1226px;top:422.11px;width:108px;height:15px;background:#e5e500"></div>
<div class="ab" style="left:1334px;top:422.11px;width:180px;height:15px;background:#e5e500"></div>
<div class="t" style="left:1226px;top:425.11px;font:9.45px 'Liberation Mono',monospace;color:#1e1e00;-webkit-text-stroke:0.25px #1e1e00">CAN</div>
<div class="t" style="left:1334px;top:425.11px;font:9.45px 'Liberation Mono',monospace;color:#1e1e00;-webkit-text-stroke:0.25px #1e1e00">CH4</div>
<div class="ab" style="left:1234px;top:438.18px;width:100px;height:15px;background:#ff8c00"></div>
<div class="ab" style="left:1334px;top:438.18px;width:180px;height:15px;background:#ffa500"></div>
<div class="t" style="left:1234px;top:441.18px;font:9.45px 'Liberation Mono',monospace;color:#553300;-webkit-text-stroke:0.25px #553300">SOF</div>
<div class="ab" style="left:1234px;top:454.25px;width:100px;height:15px;background:#ff5ccc"></div>
<div class="ab" style="left:1334px;top:454.25px;width:180px;height:15px;background:#ff8fd2"></div>
<div class="t" style="left:1234px;top:457.25px;font:9.45px 'Liberation Mono',monospace;color:#661f55;-webkit-text-stroke:0.25px #661f55">Base ID</div>
<div class="t" style="left:1334px;top:457.25px;font:9.45px 'Liberation Mono',monospace;color:#661f55;-webkit-text-stroke:0.25px #661f55">0x7e5</div>
<div class="ab" style="left:1234px;top:470.32px;width:100px;height:15px;background:#ffff00"></div>
<div class="ab" style="left:1334px;top:470.32px;width:180px;height:15px;background:#ffff55"></div>
<div class="t" style="left:1234px;top:473.32px;font:9.45px 'Liberation Mono',monospace;color:#444400;-webkit-text-stroke:0.25px #444400">SRR</div>
<div class="ab" style="left:1234px;top:486.39px;width:100px;height:15px;background:#ffff00"></div>
<div class="ab" style="left:1334px;top:486.39px;width:180px;height:15px;background:#ffff55"></div>
<div class="t" style="left:1234px;top:489.39px;font:9.45px 'Liberation Mono',monospace;color:#444400;-webkit-text-stroke:0.25px #444400">IDE</div>
<div class="t" style="left:1334px;top:489.39px;font:9.45px 'Liberation Mono',monospace;color:#444400;-webkit-text-stroke:0.25px #444400">1</div>
<div class="ab" style="left:1234px;top:502.46px;width:100px;height:15px;background:#ff5ccc"></div>
<div class="ab" style="left:1334px;top:502.46px;width:180px;height:15px;background:#ff8fd2"></div>
<div class="t" style="left:1234px;top:505.46px;font:9.45px 'Liberation Mono',monospace;color:#661f55;-webkit-text-stroke:0.25px #661f55">Full ID</div>
<div class="t" style="left:1334px;top:505.46px;font:9.45px 'Liberation Mono',monospace;color:#661f55;-webkit-text-stroke:0.25px #661f55">0x1f952485</div>
<div class="ab" style="left:1234px;top:518.53px;width:100px;height:15px;background:#ecec5a"></div>
<div class="ab" style="left:1334px;top:518.53px;width:180px;height:15px;background:#e6ee90"></div>
<div class="t" style="left:1234px;top:521.53px;font:9.45px 'Liberation Mono',monospace;color:#444400;-webkit-text-stroke:0.25px #444400">R1</div>
<div class="t" style="left:1334px;top:521.53px;font:9.45px 'Liberation Mono',monospace;color:#444400;-webkit-text-stroke:0.25px #444400">0</div>
<div class="ab" style="left:1234px;top:534.60px;width:100px;height:15px;background:#ffff00"></div>
<div class="ab" style="left:1334px;top:534.60px;width:180px;height:15px;background:#ffff55"></div>
<div class="t" style="left:1234px;top:537.60px;font:9.45px 'Liberation Mono',monospace;color:#444400;-webkit-text-stroke:0.25px #444400">EDL</div>
<div class="t" style="left:1334px;top:537.60px;font:9.45px 'Liberation Mono',monospace;color:#444400;-webkit-text-stroke:0.25px #444400">1</div>
<div class="ab" style="left:1234px;top:550.67px;width:100px;height:15px;background:#ffff00"></div>
<div class="ab" style="left:1334px;top:550.67px;width:180px;height:15px;background:#ffff55"></div>
<div class="t" style="left:1234px;top:553.67px;font:9.45px 'Liberation Mono',monospace;color:#444400;-webkit-text-stroke:0.25px #444400">R0</div>
<div class="ab" style="left:1234px;top:566.74px;width:100px;height:15px;background:#c86400"></div>
<div class="ab" style="left:1334px;top:566.74px;width:180px;height:15px;background:#ff8000"></div>
<div class="t" style="left:1234px;top:569.74px;font:9.45px 'Liberation Mono',monospace;color:#ffe0c0;-webkit-text-stroke:0.25px #ffe0c0">BRS</div>
<div class="t" style="left:1334px;top:569.74px;font:9.45px 'Liberation Mono',monospace;color:#5a2a00;-webkit-text-stroke:0.25px #5a2a00">Switching bit rate</div>
<div class="ab" style="left:1234px;top:582.81px;width:100px;height:15px;background:#c86400"></div>
<div class="ab" style="left:1334px;top:582.81px;width:180px;height:15px;background:#ff8000"></div>
<div class="t" style="left:1234px;top:585.81px;font:9.45px 'Liberation Mono',monospace;color:#ffe0c0;-webkit-text-stroke:0.25px #ffe0c0">ESI</div>
<div class="t" style="left:1334px;top:585.81px;font:9.45px 'Liberation Mono',monospace;color:#5a2a00;-webkit-text-stroke:0.25px #5a2a00">1</div>
<div class="ab" style="left:1234px;top:598.88px;width:100px;height:15px;background:#c86400"></div>
<div class="ab" style="left:1334px;top:598.88px;width:180px;height:15px;background:#ff8000"></div>
<div class="t" style="left:1234px;top:601.88px;font:9.45px 'Liberation Mono',monospace;color:#ffe0c0;-webkit-text-stroke:0.25px #ffe0c0">DLC</div>
<div class="t" style="left:1334px;top:601.88px;font:9.45px 'Liberation Mono',monospace;color:#5a2a00;-webkit-text-stroke:0.25px #5a2a00">DLC = 8, Data length = 8</div>
<div class="ab" style="left:1234px;top:614.95px;width:100px;height:15px;background:#33ffff"></div>
<div class="ab" style="left:1334px;top:614.95px;width:180px;height:15px;background:#99ffff"></div>
<div class="t" style="left:1234px;top:617.95px;font:9.45px 'Liberation Mono',monospace;color:#005f5f;-webkit-text-stroke:0.25px #005f5f">Data</div>
<div class="t" style="left:1334px;top:617.95px;font:9.45px 'Liberation Mono',monospace;color:#005f5f;-webkit-text-stroke:0.25px #005f5f">0x5b</div>
<div class="ab" style="left:1234px;top:631.02px;width:100px;height:15px;background:#33ffff"></div>
<div class="ab" style="left:1334px;top:631.02px;width:180px;height:15px;background:#99ffff"></div>
<div class="t" style="left:1234px;top:634.02px;font:9.45px 'Liberation Mono',monospace;color:#005f5f;-webkit-text-stroke:0.25px #005f5f">Data</div>
<div class="t" style="left:1334px;top:634.02px;font:9.45px 'Liberation Mono',monospace;color:#005f5f;-webkit-text-stroke:0.25px #005f5f">0xb2</div>
<div class="ab" style="left:1234px;top:647.09px;width:100px;height:15px;background:#33ffff"></div>
<div class="ab" style="left:1334px;top:647.09px;width:180px;height:15px;background:#99ffff"></div>
<div class="t" style="left:1234px;top:650.09px;font:9.45px 'Liberation Mono',monospace;color:#005f5f;-webkit-text-stroke:0.25px #005f5f">Data</div>
<div class="t" style="left:1334px;top:650.09px;font:9.45px 'Liberation Mono',monospace;color:#005f5f;-webkit-text-stroke:0.25px #005f5f">0xa5</div>
<div class="ab" style="left:1234px;top:663.16px;width:100px;height:15px;background:#33ffff"></div>
<div class="ab" style="left:1334px;top:663.16px;width:180px;height:15px;background:#99ffff"></div>
<div class="t" style="left:1234px;top:666.16px;font:9.45px 'Liberation Mono',monospace;color:#005f5f;-webkit-text-stroke:0.25px #005f5f">Data</div>
<div class="t" style="left:1334px;top:666.16px;font:9.45px 'Liberation Mono',monospace;color:#005f5f;-webkit-text-stroke:0.25px #005f5f">0x50</div>
<div class="ab" style="left:1234px;top:679.23px;width:100px;height:15px;background:#33ffff"></div>
<div class="ab" style="left:1334px;top:679.23px;width:180px;height:15px;background:#99ffff"></div>
<div class="t" style="left:1234px;top:682.23px;font:9.45px 'Liberation Mono',monospace;color:#005f5f;-webkit-text-stroke:0.25px #005f5f">Data</div>
<div class="t" style="left:1334px;top:682.23px;font:9.45px 'Liberation Mono',monospace;color:#005f5f;-webkit-text-stroke:0.25px #005f5f">0x45</div>
<div class="ab" style="left:1234px;top:695.30px;width:100px;height:15px;background:#33ffff"></div>
<div class="ab" style="left:1334px;top:695.30px;width:180px;height:15px;background:#99ffff"></div>
<div class="t" style="left:1234px;top:698.30px;font:9.45px 'Liberation Mono',monospace;color:#005f5f;-webkit-text-stroke:0.25px #005f5f">Data</div>
<div class="t" style="left:1334px;top:698.30px;font:9.45px 'Liberation Mono',monospace;color:#005f5f;-webkit-text-stroke:0.25px #005f5f">0x8b</div>
<div class="ab" style="left:1234px;top:711.37px;width:100px;height:15px;background:#33ffff"></div>
<div class="ab" style="left:1334px;top:711.37px;width:180px;height:15px;background:#99ffff"></div>
<div class="t" style="left:1234px;top:714.37px;font:9.45px 'Liberation Mono',monospace;color:#005f5f;-webkit-text-stroke:0.25px #005f5f">Data</div>
<div class="t" style="left:1334px;top:714.37px;font:9.45px 'Liberation Mono',monospace;color:#005f5f;-webkit-text-stroke:0.25px #005f5f">0x62</div>
<div class="ab" style="left:1234px;top:727.44px;width:100px;height:15px;background:#33ffff"></div>
<div class="ab" style="left:1334px;top:727.44px;width:180px;height:15px;background:#99ffff"></div>
<div class="t" style="left:1234px;top:730.44px;font:9.45px 'Liberation Mono',monospace;color:#005f5f;-webkit-text-stroke:0.25px #005f5f">Data</div>
<div class="t" style="left:1334px;top:730.44px;font:9.45px 'Liberation Mono',monospace;color:#005f5f;-webkit-text-stroke:0.25px #005f5f">0xab</div>
<div class="ab" style="left:1234px;top:743.51px;width:100px;height:15px;background:#33ff55"></div>
<div class="ab" style="left:1334px;top:743.51px;width:180px;height:15px;background:#66ff8c"></div>
<div class="t" style="left:1234px;top:746.51px;font:9.45px 'Liberation Mono',monospace;color:#005500;-webkit-text-stroke:0.25px #005500">CRC</div>
<div class="t" style="left:1334px;top:746.51px;font:9.45px 'Liberation Mono',monospace;color:#005500;-webkit-text-stroke:0.25px #005500">0x15781 OK</div>
<div class="ab" style="left:1234px;top:759.58px;width:100px;height:15px;background:#33ff55"></div>
<div class="ab" style="left:1334px;top:759.58px;width:180px;height:15px;background:#66ff8c"></div>
<div class="t" style="left:1234px;top:762.58px;font:9.45px 'Liberation Mono',monospace;color:#005500;-webkit-text-stroke:0.25px #005500">ACK</div>
<div class="ab" style="left:1234px;top:775.65px;width:100px;height:15px;background:#ff8c00"></div>
<div class="ab" style="left:1334px;top:775.65px;width:180px;height:15px;background:#ffa500"></div>
<div class="t" style="left:1234px;top:778.65px;font:9.45px 'Liberation Mono',monospace;color:#553300;-webkit-text-stroke:0.25px #553300">EOF</div>
<svg class="ab" style="left:1216px;top:796.72px" width="7" height="7"><path d="M0 0L3.5 3L0 6Z" fill="#a4a4b0"/></svg>
<div class="ab" style="left:1226px;top:791.72px;width:108px;height:15px;background:#e5e500"></div>
<div class="ab" style="left:1334px;top:791.72px;width:180px;height:15px;background:#e5e500"></div>
<div class="t" style="left:1226px;top:794.72px;font:9.45px 'Liberation Mono',monospace;color:#1e1e00;-webkit-text-stroke:0.25px #1e1e00">CAN</div>
<div class="t" style="left:1334px;top:794.72px;font:9.45px 'Liberation Mono',monospace;color:#1e1e00;-webkit-text-stroke:0.25px #1e1e00">CH4</div>
<svg class="ab" style="left:1216px;top:812.79px" width="7" height="7"><path d="M0 0L3.5 3L0 6Z" fill="#a4a4b0"/></svg>
<div class="ab" style="left:1226px;top:807.79px;width:108px;height:15px;background:#e5e500"></div>
<div class="ab" style="left:1334px;top:807.79px;width:180px;height:15px;background:#e5e500"></div>
<div class="t" style="left:1226px;top:810.79px;font:9.45px 'Liberation Mono',monospace;color:#1e1e00;-webkit-text-stroke:0.25px #1e1e00">CAN</div>
<div class="t" style="left:1334px;top:810.79px;font:9.45px 'Liberation Mono',monospace;color:#1e1e00;-webkit-text-stroke:0.25px #1e1e00">CH4</div>
<div class="ab" style="left:1214px;top:519px;width:16px;height:16px;background:#2a7ad8"></div>
<div class="ab" style="left:1234px;top:518.5px;width:280px;height:16px;border:1px solid #b4bc78"></div>
<div class="ab" style="left:8px;top:36px;width:1063px;height:528px;background:#181818;box-shadow:0 6px 22px 3px rgba(0,0,0,0.29);overflow:hidden">
<div class="ab" style="left:0px;top:34px;width:1063px;height:1px;background:#2b2b2b;"></div><svg class="ab" style="left:9.5px;top:8.799999999999997px" width="18" height="18" viewBox="0 0 18 18"><path d="M1.5 6L13 16M2 12.3L13 1.8" stroke="#2f9be6" stroke-width="3" stroke-linecap="round"/><path d="M12.6 0.8L16 2.2Q17 2.7 17 3.8V14.2Q17 15.3 16 15.8L12.6 17.2Z" fill="#2aa6f5"/></svg><div class="t" style="left:43px;top:9px;font:13px 'Liberation Sans',sans-serif;color:#cccccc;">File</div><div class="t" style="left:79.5px;top:9px;font:13px 'Liberation Sans',sans-serif;color:#cccccc;">Edit</div><div class="t" style="left:118.5px;top:9px;font:13px 'Liberation Sans',sans-serif;color:#cccccc;">Selection</div><div class="t" style="left:188px;top:9px;font:13px 'Liberation Sans',sans-serif;color:#cccccc;">View</div><svg class="ab" style="left:237px;top:15px" width="15" height="3"><circle cx="1.5" cy="1.5" r="1.3" fill="#ccc"/><circle cx="7.5" cy="1.5" r="1.3" fill="#ccc"/><circle cx="13.5" cy="1.5" r="1.3" fill="#ccc"/></svg><svg class="ab" style="left:281px;top:10px" width="14" height="12"><path d="M13 6H1.5M6.5 1L1.5 6L6.5 11" stroke="#cccccc" stroke-width="1.2" fill="none"/></svg><svg class="ab" style="left:307px;top:10px" width="14" height="12"><path d="M1 6H12.5M7.5 1L12.5 6L7.5 11" stroke="#7a7a7a" stroke-width="1.2" fill="none"/></svg><div class="ab" style="left:335px;top:5px;width:406px;height:24px;background:#242424;border:1px solid #3c3c3c;border-radius:6px"></div><svg class="ab" style="left:483px;top:9px" width="14" height="15"><circle cx="8.3" cy="5.7" r="4.6" stroke="#cccccc" stroke-width="1.1" fill="none"/><path d="M5 9L1 13.5" stroke="#cccccc" stroke-width="1.2"/></svg><div class="t" style="left:500px;top:9px;font:13px 'Liberation Sans',sans-serif;color:#cccccc;letter-spacing:0.1px">scripts-library-v3</div><svg class="ab" style="left:754px;top:10px" width="16.0" height="14.0" viewBox="0 0 16 14"><rect x="2.2" y="0.8" width="5.4" height="5" rx="2" stroke="#cccccc" stroke-width="1.4" fill="none"/><rect x="8.4" y="0.8" width="5.4" height="5" rx="2" stroke="#cccccc" stroke-width="1.4" fill="none"/><path d="M2.2 5.2Q0.6 6.5 0.9 9Q1.6 13.2 8 13.2Q14.4 13.2 15.1 9Q15.4 6.5 13.8 5.2" stroke="#cccccc" stroke-width="1.4" fill="none"/><path d="M6.3 8.2V11M9.7 8.2V11" stroke="#cccccc" stroke-width="1.5"/></svg><svg class="ab" style="left:773px;top:14px" width="9" height="6"><path d="M1 1L4.5 4.5L8 1" stroke="#cccccc" stroke-width="1.1" fill="none"/></svg><svg class="ab" style="left:868px;top:11px" width="14" height="13"><rect x="0.6" y="0.6" width="4.3" height="11.8" rx="1" stroke="#ccc" stroke-width="1.1" fill="none"/><rect x="8" y="0.6" width="5" height="4.5" rx="1.2" stroke="#ccc" stroke-width="1.1" fill="none"/><rect x="8" y="7.8" width="5" height="4.6" rx="1.2" stroke="#ccc" stroke-width="1.1" fill="none"/></svg><svg class="ab" style="left:893px;top:10px" width="15" height="14"><rect x="0.6" y="0.6" width="13.5" height="12.5" rx="1.2" stroke="#ccc" stroke-width="1.1" fill="none"/><rect x="1" y="1" width="5" height="11.7" fill="#ccc"/></svg><svg class="ab" style="left:919px;top:10px" width="15" height="14"><rect x="0.6" y="0.6" width="13.5" height="12.5" rx="1.2" stroke="#ccc" stroke-width="1.1" fill="none"/><path d="M1 9H14" stroke="#ccc" stroke-width="1.1"/></svg><svg class="ab" style="left:945px;top:10px" width="15" height="14"><rect x="0.6" y="0.6" width="13.5" height="12.5" rx="1.2" stroke="#ccc" stroke-width="1.1" fill="none"/><path d="M8.5 1V13" stroke="#ccc" stroke-width="1.1"/></svg><div class="ab" style="left:978px;top:20px;width:10px;height:2px;background:#e6e6e6;"></div><svg class="ab" style="left:1010px;top:12px" width="11" height="11"><rect x="1" y="1" width="9" height="9" stroke="#e6e6e6" stroke-width="2" fill="none"/></svg><svg class="ab" style="left:1042px;top:12px" width="11" height="11"><path d="M1 1L10 10M10 1L1 10" stroke="#e6e6e6" stroke-width="2"/></svg><div class="ab" style="left:47px;top:34px;width:1px;height:473px;background:#2b2b2b;"></div><div class="ab" style="left:0px;top:35px;width:2px;height:47px;background:#0078d4;"></div><svg class="ab" style="left:12px;top:46px" width="24" height="26" viewBox="0 0 24 26"><path d="M7 1.5H15.5L21.5 7.5V19.5Q21.5 20.5 20.5 20.5H8Q7 20.5 7 19.5Z M15 1.5V8H21.5" stroke="#d7d7d7" stroke-width="1.5" fill="none" stroke-linejoin="round"/><path d="M7 7H2.5Q1.5 7 1.5 8V24Q1.5 25 2.5 25H14.5Q15.5 25 15.5 24V20.5" stroke="#d7d7d7" stroke-width="1.5" fill="none" stroke-linejoin="round"/></svg><svg class="ab" style="left:13px;top:95px" width="24" height="25"><circle cx="14" cy="9.5" r="7.8" stroke="#909090" stroke-width="1.6" fill="none"/><path d="M8.5 15L1.5 23" stroke="#909090" stroke-width="1.8"/></svg><svg class="ab" style="left:13px;top:143px" width="22" height="26"><circle cx="5" cy="4.5" r="3" stroke="#909090" stroke-width="1.5" fill="none"/><circle cx="5" cy="21" r="3" stroke="#909090" stroke-width="1.5" fill="none"/><circle cx="17" cy="10" r="3" stroke="#909090" stroke-width="1.5" fill="none"/><path d="M5 7.5V18M17 13Q17 17 5 18" stroke="#909090" stroke-width="1.5" fill="none"/></svg><svg class="ab" style="left:11px;top:191px" width="26" height="25"><path d="M10 1.5L24.5 10.5L12 18" stroke="#909090" stroke-width="1.5" fill="none" stroke-linejoin="round"/><path d="M10 1.5V9" stroke="#909090" stroke-width="1.5"/><ellipse cx="6.5" cy="18" rx="3.5" ry="4.5" stroke="#909090" stroke-width="1.5" fill="none"/><path d="M1 15H3M10 15H12M1 19H3M10 19H12M1.5 23L3.5 21M11.5 23L9.5 21M4.5 13.5L3 12M8.5 13.5L10 12M3 17H10" stroke="#909090" stroke-width="1.3"/></svg><svg class="ab" style="left:12px;top:240px" width="25" height="24"><path d="M10 17H2.5Q1 17 1 15.5V2.5Q1 1 2.5 1H21.5Q23 1 23 2.5V9" stroke="#909090" stroke-width="1.5" fill="none"/><path d="M5 21H11" stroke="#909090" stroke-width="1.5"/><circle cx="18" cy="17.5" r="5.5" stroke="#909090" stroke-width="1.5" fill="none"/><path d="M16 16L17.5 17.5L16 19M20 16L18.5 17.5L20 19" stroke="#909090" stroke-width="1" fill="none"/></svg><svg class="ab" style="left:12px;top:286px" width="25" height="26"><path d="M1 8.5H9.5V17H18V25.5H1Z M1 17H9.5V25.5" stroke="#909090" stroke-width="1.5" fill="none"/><rect x="14" y="1" width="9.5" height="9.5" stroke="#909090" stroke-width="1.5" fill="none"/></svg><svg class="ab" style="left:14px;top:345px" width="20" height="4"><circle cx="2" cy="2" r="1.6" fill="#909090"/><circle cx="10" cy="2" r="1.6" fill="#909090"/><circle cx="18" cy="2" r="1.6" fill="#909090"/></svg><svg class="ab" style="left:12px;top:421px" width="25" height="26"><circle cx="12.5" cy="13" r="11.5" stroke="#909090" stroke-width="1.6" fill="none"/><circle cx="12.5" cy="9.5" r="4.5" stroke="#909090" stroke-width="1.6" fill="none"/><path d="M5 21Q7 15.5 12.5 15.5Q18 15.5 20 21" stroke="#909090" stroke-width="1.6" fill="none"/></svg><svg class="ab" style="left:12px;top:469px" width="25" height="25"><polygon points="24.16,9.65 24.16,15.35 20.35,16.01 20.53,15.57 22.76,18.73 18.73,22.76 15.57,20.53 16.01,20.35 15.35,24.16 9.65,24.16 8.99,20.35 9.43,20.53 6.27,22.76 2.24,18.73 4.47,15.57 4.65,16.01 0.84,15.35 0.84,9.65 4.65,8.99 4.47,9.43 2.24,6.27 6.27,2.24 9.43,4.47 8.99,4.65 9.65,0.84 15.35,0.84 16.01,4.65 15.57,4.47 18.73,2.24 22.76,6.27 20.53,9.43 20.35,8.99" stroke="#909090" stroke-width="1.5" fill="none" stroke-linejoin="round"/><circle cx="12.5" cy="12.5" r="3.5" stroke="#909090" stroke-width="1.5" fill="none"/></svg><div class="ab" style="left:276px;top:34px;width:1px;height:473px;background:#2b2b2b;"></div><div class="t" style="left:68px;top:46.5px;font:10px 'Liberation Sans',sans-serif;color:#cccccc;letter-spacing:-0.1px">EXPLORER</div><svg class="ab" style="left:248px;top:51px" width="13" height="3"><circle cx="1.5" cy="1.5" r="1.2" fill="#ccc"/><circle cx="6.5" cy="1.5" r="1.2" fill="#ccc"/><circle cx="11.5" cy="1.5" r="1.2" fill="#ccc"/></svg><svg class="ab" style="left:53px;top:77px" width="11" height="7"><path d="M1 1L5.5 5.5L10 1" stroke="#cccccc" stroke-width="1.2" fill="none"/></svg><div class="t" style="left:68px;top:74px;font:bold 10.5px 'Liberation Sans',sans-serif;color:#cccccc;">OPEN EDITORS</div><div class="ab" style="left:48px;top:136px;width:228px;height:22px;background:#37373d;"></div><div class="t" style="left:94.5px;top:97.80000000000001px;font:bold 10px 'Liberation Sans',sans-serif;color:#cbcb41;letter-spacing:-0.5px">JS</div><div class="t" style="left:112px;top:95.30000000000001px;font:13px 'Liberation Sans',sans-serif;color:#cccccc;">modbus.js</div><div class="t" style="left:94.5px;top:119.69999999999999px;font:bold 10px 'Liberation Sans',sans-serif;color:#cbcb41;letter-spacing:-0.5px">JS</div><div class="t" style="left:112px;top:117.19999999999999px;font:13px 'Liberation Sans',sans-serif;color:#cccccc;">i2c.js</div><div class="t" style="left:94.5px;top:141.7px;font:bold 10px 'Liberation Sans',sans-serif;color:#cbcb41;letter-spacing:-0.5px">JS</div><div class="t" style="left:112px;top:139.2px;font:13px 'Liberation Sans',sans-serif;color:#cccccc;font-style:italic">frequency_modulation.js</div><div class="t" style="left:94.5px;top:163.4px;font:bold 10px 'Liberation Sans',sans-serif;color:#cbcb41;letter-spacing:-0.5px">JS</div><div class="t" style="left:112px;top:160.9px;font:13px 'Liberation Sans',sans-serif;color:#cccccc;">uart.js</div><svg class="ab" style="left:76px;top:142px" width="9" height="9"><path d="M0.5 0.5L8.5 8.5M8.5 0.5L0.5 8.5" stroke="#cccccc" stroke-width="1.2"/></svg><div class="ab" style="left:48px;top:180px;width:228px;height:1px;background:#2b2b2b;"></div><svg class="ab" style="left:53px;top:189px" width="11" height="7"><path d="M1 1L5.5 5.5L10 1" stroke="#cccccc" stroke-width="1.2" fill="none"/></svg><div class="t" style="left:68px;top:186px;font:bold 11px 'Liberation Sans',sans-serif;color:#cccccc;letter-spacing:-0.25px">SCRIPTS-LIBRARY...</div><svg class="ab" style="left:176px;top:184px" width="15" height="16"><path d="M8 14H1.5V1H7.5L11 4.5V8" stroke="#ccc" stroke-width="1.1" fill="none"/><path d="M7.5 1V4.5H11" stroke="#ccc" stroke-width="1.1" fill="none"/><path d="M11 9.5V15M8.3 12.2H13.8" stroke="#ccc" stroke-width="1.1"/></svg><svg class="ab" style="left:199px;top:184px" width="16" height="16"><path d="M8 13H1V2H5.5L7 3.5H14V8" stroke="#ccc" stroke-width="1.1" fill="none"/><path d="M1 5.5H14" stroke="#ccc" stroke-width="1.1"/><path d="M12 9.5V15M9.3 12.2H14.8" stroke="#ccc" stroke-width="1.1"/></svg><svg class="ab" style="left:224px;top:185px" width="13" height="14"><path d="M10.5 3.5A5.2 5.2 0 1 1 6.5 2" stroke="#ccc" stroke-width="1.1" fill="none"/><path d="M4.5 0.5L7 2.2L5 4.5" stroke="#ccc" stroke-width="1.1" fill="none"/></svg><svg class="ab" style="left:248px;top:185px" width="13" height="13"><rect x="0.6" y="3.6" width="8.8" height="8.8" rx="1" stroke="#ccc" stroke-width="1.1" fill="none"/><path d="M3.5 3.5V1.6Q3.5 0.6 4.5 0.6H11.4Q12.4 0.6 12.4 1.6V8.5Q12.4 9.5 11.4 9.5H9.5" stroke="#ccc" stroke-width="1.1" fill="none"/><path d="M2.5 8H7.5" stroke="#ccc" stroke-width="1.1"/></svg><div class="t" style="left:64.5px;top:207px;font:bold 10px 'Liberation Sans',sans-serif;color:#cbcb41;letter-spacing:-0.5px">JS</div><div class="t" style="left:82px;top:204.5px;font:13px 'Liberation Sans',sans-serif;color:#cccccc;">1-wire.js</div><div class="t" style="left:64.5px;top:229px;font:bold 10px 'Liberation Sans',sans-serif;color:#cbcb41;letter-spacing:-0.5px">JS</div><div class="t" style="left:82px;top:226.5px;font:13px 'Liberation Sans',sans-serif;color:#cccccc;">atmel-swi.js</div><div class="t" style="left:64.5px;top:251px;font:bold 10px 'Liberation Sans',sans-serif;color:#cbcb41;letter-spacing:-0.5px">JS</div><div class="t" style="left:82px;top:248.5px;font:13px 'Liberation Sans',sans-serif;color:#cccccc;">biphase_encoding.js</div><div class="t" style="left:64.5px;top:273px;font:bold 10px 'Liberation Sans',sans-serif;color:#cbcb41;letter-spacing:-0.5px">JS</div><div class="t" style="left:82px;top:270.5px;font:13px 'Liberation Sans',sans-serif;color:#cccccc;">can.js</div><div class="t" style="left:64.5px;top:295px;font:bold 10px 'Liberation Sans',sans-serif;color:#cbcb41;letter-spacing:-0.5px">JS</div><div class="t" style="left:82px;top:292.5px;font:13px 'Liberation Sans',sans-serif;color:#cccccc;">csv_import.js</div><div class="t" style="left:64.5px;top:317px;font:bold 10px 'Liberation Sans',sans-serif;color:#cbcb41;letter-spacing:-0.5px">JS</div><div class="t" style="left:82px;top:314.5px;font:13px 'Liberation Sans',sans-serif;color:#cccccc;">dhtxx.js</div><div class="t" style="left:64.5px;top:339px;font:bold 10px 'Liberation Sans',sans-serif;color:#cbcb41;letter-spacing:-0.5px">JS</div><div class="t" style="left:82px;top:336.5px;font:13px 'Liberation Sans',sans-serif;color:#cccccc;">dmx512.js</div><div class="t" style="left:64.5px;top:361px;font:bold 10px 'Liberation Sans',sans-serif;color:#cbcb41;letter-spacing:-0.5px">JS</div><div class="t" style="left:82px;top:358.5px;font:13px 'Liberation Sans',sans-serif;color:#cccccc;">FDX-B.js</div><div class="ab" style="left:48px;top:378px;width:228px;height:22px;background:#04395e;border:1px solid #0078d4"></div><div class="t" style="left:64.5px;top:383px;font:bold 10px 'Liberation Sans',sans-serif;color:#cbcb41;letter-spacing:-0.5px">JS</div><div class="t" style="left:82px;top:380.5px;font:13px 'Liberation Sans',sans-serif;color:#cccccc;">frequency_modulation.js</div><div class="t" style="left:64.5px;top:405px;font:bold 10px 'Liberation Sans',sans-serif;color:#cbcb41;letter-spacing:-0.5px">JS</div><div class="t" style="left:82px;top:402.5px;font:13px 'Liberation Sans',sans-serif;color:#cccccc;">gray_code.js</div><div class="t" style="left:64.5px;top:427px;font:bold 10px 'Liberation Sans',sans-serif;color:#cbcb41;letter-spacing:-0.5px">JS</div><div class="t" style="left:82px;top:424.5px;font:13px 'Liberation Sans',sans-serif;color:#cccccc;">hdmi-cec.js</div><div class="t" style="left:64.5px;top:449px;font:bold 10px 'Liberation Sans',sans-serif;color:#cbcb41;letter-spacing:-0.5px">JS</div><div class="t" style="left:82px;top:446.5px;font:13px 'Liberation Sans',sans-serif;color:#cccccc;">i2c_scanner.js</div><div class="ab" style="left:48px;top:462px;width:228px;height:1px;background:#2b2b2b;"></div><svg class="ab" style="left:55px;top:468px" width="7" height="11"><path d="M1 1L5.5 5.5L1 10" stroke="#cccccc" stroke-width="1.2" fill="none"/></svg><div class="t" style="left:68px;top:468px;font:bold 11px 'Liberation Sans',sans-serif;color:#cccccc;">OUTLINE</div><div class="ab" style="left:48px;top:484px;width:228px;height:1px;background:#2b2b2b;"></div><svg class="ab" style="left:55px;top:490px" width="7" height="11"><path d="M1 1L5.5 5.5L1 10" stroke="#cccccc" stroke-width="1.2" fill="none"/></svg><div class="t" style="left:68px;top:490px;font:bold 11px 'Liberation Sans',sans-serif;color:#cccccc;">TIMELINE</div><div class="ab" style="left:277px;top:34px;width:786px;height:473px;background:#1f1f1f;"></div><div class="ab" style="left:277px;top:35px;width:786px;height:34px;background:#181818;"></div><div class="ab" style="left:277px;top:68px;width:786px;height:1px;background:#2b2b2b;"></div><div class="t" style="left:292px;top:47.5px;font:bold 10px 'Liberation Sans',sans-serif;color:#cbcb41;letter-spacing:-0.5px">JS</div><div class="t" style="left:309.5px;top:45px;font:13px 'Liberation Sans',sans-serif;color:#9d9d9d;">modbus.js</div><div class="ab" style="left:396px;top:35px;width:1px;height:34px;background:#2b2b2b;"></div><div class="t" style="left:412px;top:47.5px;font:bold 10px 'Liberation Sans',sans-serif;color:#cbcb41;letter-spacing:-0.5px">JS</div><div class="t" style="left:429.5px;top:45px;font:13px 'Liberation Sans',sans-serif;color:#9d9d9d;">i2c.js</div><div class="ab" style="left:515px;top:35px;width:1px;height:34px;background:#2b2b2b;"></div><div class="ab" style="left:516px;top:35px;width:202px;height:34px;background:#1f1f1f;"></div><div class="ab" style="left:516px;top:35px;width:202px;height:1px;background:#0078d4;"></div><div class="t" style="left:532px;top:47.5px;font:bold 10px 'Liberation Sans',sans-serif;color:#cbcb41;letter-spacing:-0.5px">JS</div><div class="t" style="left:549px;top:45px;font:italic 13px 'Liberation Sans',sans-serif;color:#ffffff;">frequency_modulation.js</div><svg class="ab" style="left:699px;top:48px" width="10" height="10"><path d="M0.8 0.8L9.2 9.2M9.2 0.8L0.8 9.2" stroke="#e0e0e0" stroke-width="1.3"/></svg><div class="ab" style="left:717px;top:35px;width:1px;height:34px;background:#2b2b2b;"></div><div class="t" style="left:734.5px;top:47.5px;font:bold 10px 'Liberation Sans',sans-serif;color:#cbcb41;letter-spacing:-0.5px">JS</div><div class="t" style="left:752px;top:45px;font:13px 'Liberation Sans',sans-serif;color:#9d9d9d;">uart.js</div><div class="ab" style="left:837px;top:35px;width:1px;height:34px;background:#2b2b2b;"></div><svg class="ab" style="left:1008px;top:46px" width="14" height="14"><rect x="0.6" y="0.6" width="12.5" height="12.5" rx="1" stroke="#ccc" stroke-width="1.1" fill="none"/><path d="M6.85 1V13" stroke="#ccc" stroke-width="1.1"/></svg><svg class="ab" style="left:1033px;top:51px" width="14" height="3"><circle cx="1.5" cy="1.5" r="1.2" fill="#ccc"/><circle cx="7" cy="1.5" r="1.2" fill="#ccc"/><circle cx="12.5" cy="1.5" r="1.2" fill="#ccc"/></svg><div class="t" style="left:298px;top:76px;font:bold 10px 'Liberation Sans',sans-serif;color:#cbcb41;letter-spacing:-0.5px">JS</div><div class="t" style="left:315px;top:73.5px;font:13px 'Liberation Sans',sans-serif;color:#a9a9a9;letter-spacing:0.15px">frequency_modulation.js</div><svg class="ab" style="left:466px;top:76px" width="6" height="10"><path d="M1 1L5 5L1 9" stroke="#a9a9a9" stroke-width="1.1" fill="none"/></svg><div class="t" style="left:477px;top:73.5px;font:13px 'Liberation Sans',sans-serif;color:#a9a9a9;">...</div><div class="ab" style="left:277px;top:91px;width:690px;height:416px;overflow:hidden"><div class="ab" style="left:70px;top:68px;width:700px;height:19px;border:2px solid #2a2a2a;border-right:none"></div><div class="ab" style="left:71px;top:29.5px;width:1px;height:19px;background:#404040"></div><div class="ab" style="left:71px;top:181.5px;width:1px;height:240px;background:#404040"></div><div class="t" style="left:0px;top:11.5px;width:44px;text-align:right;font:14px 'Liberation Mono',monospace;line-height:19px;color:#6e7681">319</div><div class="t" style="left:70.5px;top:11.5px;font:14px 'Liberation Mono',monospace;line-height:19px;white-space:pre"><span style="color:#ffd700">{</span></div><div class="t" style="left:0px;top:30.5px;width:44px;text-align:right;font:14px 'Liberation Mono',monospace;line-height:19px;color:#6e7681">320</div><div class="t" style="left:70.5px;top:30.5px;font:14px 'Liberation Mono',monospace;line-height:19px;white-space:pre"><span style="color:#cccccc">  </span><span style="color:#c586c0">return</span><span style="color:#cccccc"> </span><span style="color:#ce9178">&quot;&quot;</span><span style="color:#cccccc">; </span><span style="color:#6a9955">//All good.</span></div><div class="t" style="left:0px;top:49.5px;width:44px;text-align:right;font:14px 'Liberation Mono',monospace;line-height:19px;color:#6e7681">321</div><div class="t" style="left:70.5px;top:49.5px;font:14px 'Liberation Mono',monospace;line-height:19px;white-space:pre"><span style="color:#ffd700">}</span></div><div class="t" style="left:0px;top:68.5px;width:44px;text-align:right;font:14px 'Liberation Mono',monospace;line-height:19px;color:#cccccc">322</div><div class="t" style="left:0px;top:87.5px;width:44px;text-align:right;font:14px 'Liberation Mono',monospace;line-height:19px;color:#6e7681">323</div><div class="t" style="left:70.5px;top:87.5px;font:14px 'Liberation Mono',monospace;line-height:19px;white-space:pre"><span style="color:#6a9955">//Global variables</span></div><div class="t" style="left:0px;top:106.5px;width:44px;text-align:right;font:14px 'Liberation Mono',monospace;line-height:19px;color:#6e7681">324</div><div class="t" style="left:70.5px;top:106.5px;font:14px 'Liberation Mono',monospace;line-height:19px;white-space:pre"><span style="color:#569cd6">var</span><span style="color:#cccccc"> </span><span style="color:#9cdcfe">sampling_rate</span><span style="color:#cccccc">;</span></div><div class="t" style="left:0px;top:125.5px;width:44px;text-align:right;font:14px 'Liberation Mono',monospace;line-height:19px;color:#6e7681">325</div><div class="t" style="left:0px;top:144.5px;width:44px;text-align:right;font:14px 'Liberation Mono',monospace;line-height:19px;color:#6e7681">326</div><div class="t" style="left:70.5px;top:144.5px;font:14px 'Liberation Mono',monospace;line-height:19px;white-space:pre"><span style="color:#569cd6">function</span><span style="color:#cccccc"> </span><span style="color:#dcdcaa">on_pattern_generate</span><span style="color:#ffd700">()</span></div><div class="t" style="left:0px;top:163.5px;width:44px;text-align:right;font:14px 'Liberation Mono',monospace;line-height:19px;color:#6e7681">327</div><div class="t" style="left:70.5px;top:163.5px;font:14px 'Liberation Mono',monospace;line-height:19px;white-space:pre"><span style="color:#ffd700">{</span></div><div class="t" style="left:0px;top:182.5px;width:44px;text-align:right;font:14px 'Liberation Mono',monospace;line-height:19px;color:#6e7681">328</div><div class="t" style="left:70.5px;top:182.5px;font:14px 'Liberation Mono',monospace;line-height:19px;white-space:pre"><span style="color:#cccccc">  </span><span style="color:#569cd6">var</span><span style="color:#cccccc"> </span><span style="color:#9cdcfe">fm_builder</span><span style="color:#cccccc"> = </span><span style="color:#dcdcaa">get_builder_object</span><span style="color:#da70d6">()</span><span style="color:#cccccc">;</span></div><div class="t" style="left:0px;top:201.5px;width:44px;text-align:right;font:14px 'Liberation Mono',monospace;line-height:19px;color:#6e7681">329</div><div class="t" style="left:0px;top:220.5px;width:44px;text-align:right;font:14px 'Liberation Mono',monospace;line-height:19px;color:#6e7681">330</div><div class="t" style="left:70.5px;top:220.5px;font:14px 'Liberation Mono',monospace;line-height:19px;white-space:pre"><span style="color:#cccccc">  </span><span style="color:#9cdcfe">gen_type_group</span><span style="color:#cccccc"> = </span><span style="color:#9cdcfe">ScanaStudio</span><span style="color:#cccccc">.</span><span style="color:#dcdcaa">gui_get_value</span><span style="color:#da70d6">(</span><span style="color:#ce9178">&quot;gen_type_group&quot;</span><span style="color:#da70d6">)</span><span style="color:#cccccc">;</span></div><div class="t" style="left:0px;top:239.5px;width:44px;text-align:right;font:14px 'Liberation Mono',monospace;line-height:19px;color:#6e7681">331</div><div class="t" style="left:70.5px;top:239.5px;font:14px 'Liberation Mono',monospace;line-height:19px;white-space:pre"><span style="color:#cccccc">  </span><span style="color:#9cdcfe">channel</span><span style="color:#cccccc"> = </span><span style="color:#9cdcfe">ScanaStudio</span><span style="color:#cccccc">.</span><span style="color:#dcdcaa">gui_get_value</span><span style="color:#da70d6">(</span><span style="color:#ce9178">&quot;channel&quot;</span><span style="color:#da70d6">)</span><span style="color:#cccccc">;</span></div><div class="t" style="left:0px;top:258.5px;width:44px;text-align:right;font:14px 'Liberation Mono',monospace;line-height:19px;color:#6e7681">332</div><div class="t" style="left:70.5px;top:258.5px;font:14px 'Liberation Mono',monospace;line-height:19px;white-space:pre"><span style="color:#cccccc">  </span><span style="color:#9cdcfe">mod_type</span><span style="color:#cccccc"> = </span><span style="color:#9cdcfe">ScanaStudio</span><span style="color:#cccccc">.</span><span style="color:#dcdcaa">gui_get_value</span><span style="color:#da70d6">(</span><span style="color:#ce9178">&quot;mod_type&quot;</span><span style="color:#da70d6">)</span><span style="color:#cccccc">;</span></div><div class="t" style="left:0px;top:277.5px;width:44px;text-align:right;font:14px 'Liberation Mono',monospace;line-height:19px;color:#6e7681">333</div><div class="t" style="left:0px;top:296.5px;width:44px;text-align:right;font:14px 'Liberation Mono',monospace;line-height:19px;color:#6e7681">334</div><div class="t" style="left:70.5px;top:296.5px;font:14px 'Liberation Mono',monospace;line-height:19px;white-space:pre"><span style="color:#cccccc">  </span><span style="color:#6a9955">/*ELECTRICAL SETTINGS*/</span></div><div class="t" style="left:0px;top:315.5px;width:44px;text-align:right;font:14px 'Liberation Mono',monospace;line-height:19px;color:#6e7681">335</div><div class="t" style="left:0px;top:334.5px;width:44px;text-align:right;font:14px 'Liberation Mono',monospace;line-height:19px;color:#6e7681">336</div><div class="t" style="left:70.5px;top:334.5px;font:14px 'Liberation Mono',monospace;line-height:19px;white-space:pre"><span style="color:#cccccc">  </span><span style="color:#9cdcfe">ScanaStudio</span><span style="color:#cccccc">.</span><span style="color:#dcdcaa">builder_set_out_voltage</span><span style="color:#da70d6">(</span><span style="color:#9cdcfe">channel</span><span style="color:#cccccc">, </span><span style="color:#b5cea8">3300</span><span style="color:#da70d6">)</span><span style="color:#cccccc">;</span></div><div class="t" style="left:0px;top:353.5px;width:44px;text-align:right;font:14px 'Liberation Mono',monospace;line-height:19px;color:#6e7681">337</div><div class="t" style="left:70.5px;top:353.5px;font:14px 'Liberation Mono',monospace;line-height:19px;white-space:pre"><span style="color:#cccccc">  </span><span style="color:#9cdcfe">ScanaStudio</span><span style="color:#cccccc">.</span><span style="color:#dcdcaa">builder_set_idle_state</span><span style="color:#da70d6">(</span><span style="color:#9cdcfe">channel</span><span style="color:#cccccc">, </span><span style="color:#b5cea8">0</span><span style="color:#da70d6">)</span><span style="color:#cccccc">;</span></div><div class="t" style="left:0px;top:372.5px;width:44px;text-align:right;font:14px 'Liberation Mono',monospace;line-height:19px;color:#6e7681">338</div><div class="t" style="left:70.5px;top:372.5px;font:14px 'Liberation Mono',monospace;line-height:19px;white-space:pre"><span style="color:#cccccc">  </span><span style="color:#9cdcfe">ScanaStudio</span><span style="color:#cccccc">.</span><span style="color:#dcdcaa">builder_set_io</span><span style="color:#da70d6">(</span><span style="color:#9cdcfe">channel</span><span style="color:#cccccc">, </span><span style="color:#9cdcfe">ScanaStudio</span><span style="color:#cccccc">.</span><span style="color:#9cdcfe">io_type</span><span style="color:#cccccc">.</span><span style="color:#9cdcfe">push_pull</span><span style="color:#da70d6">)</span><span style="color:#cccccc">;</span></div><div class="t" style="left:0px;top:391.5px;width:44px;text-align:right;font:14px 'Liberation Mono',monospace;line-height:19px;color:#6e7681">339</div><div class="t" style="left:0px;top:410.5px;width:44px;text-align:right;font:14px 'Liberation Mono',monospace;line-height:19px;color:#6e7681">340</div><div class="t" style="left:70.5px;top:410.5px;font:14px 'Liberation Mono',monospace;line-height:19px;white-space:pre"><span style="color:#cccccc">  </span><span style="color:#6a9955">//WAS USED TO SEND SAMPLES!</span></div><div class="ab" style="left:0px;top:0px;width:690px;height:20.5px;background:#1f1f1f;box-shadow:0 1.5px 2px rgba(0,0,0,1)"></div><div class="t" style="left:0px;top:1.5px;width:44px;text-align:right;font:14px 'Liberation Mono',monospace;line-height:19px;color:#6e7681">318</div><div class="t" style="left:70.5px;top:1.5px;font:14px 'Liberation Mono',monospace;line-height:19px"><span style="color:#569cd6">function</span><span style="color:#cccccc"> </span><span style="color:#dcdcaa">on_eval_gui_pattern_generator</span><span style="color:#ffd700">()</span></div></div><svg class="ab" style="left:976px;top:91px" width="73" height="414" overflow="visible"><rect x="6" y="1" width="13" height="1.5" fill="#b08060" opacity="0.8"/><rect x="19" y="1" width="10" height="1.5" fill="#6f9fc8" opacity="0.8"/><rect x="30" y="1" width="1" height="1.5" fill="#6f9fc8" opacity="0.8"/><rect x="4" y="3" width="11" height="1.5" fill="#6f9fc8" opacity="0.8"/><rect x="16" y="3" width="6" height="1.5" fill="#6f9fc8" opacity="0.8"/><rect x="23" y="3" width="6" height="1.5" fill="#b8b890" opacity="0.8"/><rect x="30" y="3" width="2" height="1.5" fill="#b8b890" opacity="0.8"/><rect x="4" y="5" width="12" height="1.5" fill="#b08060" opacity="0.8"/><rect x="17" y="5" width="5" height="1.5" fill="#6f9fc8" opacity="0.8"/><rect x="22" y="5" width="2" height="1.5" fill="#6f9fc8" opacity="0.8"/><rect x="4" y="7" width="7" height="1.5" fill="#b8b890" opacity="0.8"/><rect x="11" y="7" width="11" height="1.5" fill="#b08060" opacity="0.8"/><rect x="23" y="7" width="2" height="1.5" fill="#6f9fc8" opacity="0.8"/><rect x="4" y="9" width="3" height="1.5" fill="#b8b890" opacity="0.8"/><rect x="8" y="9" width="5" height="1.5" fill="#b08060" opacity="0.8"/><rect x="14" y="9" width="4" height="1.5" fill="#b8b890" opacity="0.8"/><rect x="19" y="9" width="12" height="1.5" fill="#6f9fc8" opacity="0.8"/><rect x="32" y="9" width="13" height="1.5" fill="#b8b890" opacity="0.8"/><rect x="45" y="9" width="4" height="1.5" fill="#b8b890" opacity="0.8"/><rect x="4" y="11" width="10" height="1.5" fill="#6f9fc8" opacity="0.8"/><rect x="15" y="11" width="5" height="1.5" fill="#6f9fc8" opacity="0.8"/><rect x="21" y="11" width="3" height="1.5" fill="#b8b890" opacity="0.8"/><rect x="25" y="11" width="3" height="1.5" fill="#6f9fc8" opacity="0.8"/><rect x="29" y="11" width="9" height="1.5" fill="#6f9fc8" opacity="0.8"/><rect x="39" y="11" width="2" height="1.5" fill="#b08060" opacity="0.8"/><rect x="4" y="13" width="6" height="1.5" fill="#6f9fc8" opacity="0.8"/><rect x="11" y="13" width="11" height="1.5" fill="#b8b890" opacity="0.8"/><rect x="23" y="13" width="7" height="1.5" fill="#6f9fc8" opacity="0.8"/><rect x="30" y="13" width="7" height="1.5" fill="#b8b890" opacity="0.8"/><rect x="4" y="17" width="8" height="1.5" fill="#b8b890" opacity="0.8"/><rect x="12" y="17" width="8" height="1.5" fill="#b8b890" opacity="0.8"/><rect x="21" y="17" width="11" height="1.5" fill="#6f9fc8" opacity="0.8"/><rect x="33" y="17" width="10" height="1.5" fill="#b8b890" opacity="0.8"/><rect x="2" y="25" width="3" height="1.5" fill="#6f9fc8" opacity="0.8"/><rect x="6" y="25" width="11" height="1.5" fill="#b8b890" opacity="0.8"/><rect x="17" y="25" width="6" height="1.5" fill="#b8b890" opacity="0.8"/><rect x="24" y="25" width="6" height="1.5" fill="#b8b890" opacity="0.8"/><rect x="4" y="29" width="8" height="1.5" fill="#6f9fc8" opacity="0.8"/><rect x="12" y="29" width="12" height="1.5" fill="#6f9fc8" opacity="0.8"/><rect x="25" y="29" width="9" height="1.5" fill="#6f9fc8" opacity="0.8"/><rect x="34" y="29" width="9" height="1.5" fill="#b8b890" opacity="0.8"/><rect x="43" y="29" width="3" height="1.5" fill="#a0a0a0" opacity="0.8"/><rect x="47" y="29" width="5" height="1.5" fill="#a0a0a0" opacity="0.8"/><rect x="53" y="29" width="5" height="1.5" fill="#a0a0a0" opacity="0.8"/><rect x="59" y="29" width="2" height="1.5" fill="#a0a0a0" opacity="0.8"/><rect x="4" y="31" width="4" height="1.5" fill="#a0a0a0" opacity="0.8"/><rect x="9" y="31" width="5" height="1.5" fill="#a0a0a0" opacity="0.8"/><rect x="15" y="31" width="5" height="1.5" fill="#6f9fc8" opacity="0.8"/><rect x="21" y="31" width="7" height="1.5" fill="#b8b890" opacity="0.8"/><rect x="28" y="31" width="8" height="1.5" fill="#6f9fc8" opacity="0.8"/><rect x="37" y="31" width="2" height="1.5" fill="#b8b890" opacity="0.8"/><rect x="6" y="33" width="8" height="1.5" fill="#6f9fc8" opacity="0.8"/><rect x="15" y="33" width="3" height="1.5" fill="#a0a0a0" opacity="0.8"/><rect x="19" y="33" width="7" height="1.5" fill="#b8b890" opacity="0.8"/><rect x="27" y="33" width="7" height="1.5" fill="#a0a0a0" opacity="0.8"/><rect x="35" y="33" width="11" height="1.5" fill="#b8b890" opacity="0.8"/><rect x="47" y="33" width="1" height="1.5" fill="#b8b890" opacity="0.8"/><rect x="4" y="35" width="5" height="1.5" fill="#a0a0a0" opacity="0.8"/><rect x="10" y="35" width="8" height="1.5" fill="#6f9fc8" opacity="0.8"/><rect x="19" y="35" width="5" height="1.5" fill="#6f9fc8" opacity="0.8"/><rect x="25" y="35" width="10" height="1.5" fill="#b8b890" opacity="0.8"/><rect x="36" y="35" width="4" height="1.5" fill="#a0a0a0" opacity="0.8"/><rect x="40" y="35" width="12" height="1.5" fill="#a0a0a0" opacity="0.8"/><rect x="6" y="37" width="3" height="1.5" fill="#6f9fc8" opacity="0.8"/><rect x="9" y="37" width="12" height="1.5" fill="#a0a0a0" opacity="0.8"/><rect x="22" y="37" width="13" height="1.5" fill="#6f9fc8" opacity="0.8"/><rect x="35" y="37" width="12" height="1.5" fill="#6f9fc8" opacity="0.8"/><rect x="4" y="39" width="5" height="1.5" fill="#6f9fc8" opacity="0.8"/><rect x="9" y="39" width="4" height="1.5" fill="#b8b890" opacity="0.8"/><rect x="13" y="39" width="10" height="1.5" fill="#6f9fc8" opacity="0.8"/><rect x="24" y="39" width="3" height="1.5" fill="#a0a0a0" opacity="0.8"/><rect x="28" y="39" width="8" height="1.5" fill="#a0a0a0" opacity="0.8"/><rect x="37" y="39" width="7" height="1.5" fill="#6f9fc8" opacity="0.8"/><rect x="6" y="41" width="3" height="1.5" fill="#b8b890" opacity="0.8"/><rect x="10" y="41" width="7" height="1.5" fill="#a0a0a0" opacity="0.8"/><rect x="17" y="41" width="11" height="1.5" fill="#b8b890" opacity="0.8"/><rect x="28" y="41" width="11" height="1.5" fill="#b8b890" opacity="0.8"/><rect x="39" y="41" width="7" height="1.5" fill="#b8b890" opacity="0.8"/><rect x="47" y="41" width="6" height="1.5" fill="#b8b890" opacity="0.8"/><rect x="6" y="43" width="11" height="1.5" fill="#b8b890" opacity="0.8"/><rect x="18" y="43" width="5" height="1.5" fill="#6f9fc8" opacity="0.8"/><rect x="24" y="43" width="9" height="1.5" fill="#a0a0a0" opacity="0.8"/><rect x="33" y="43" width="5" height="1.5" fill="#6f9fc8" opacity="0.8"/><rect x="39" y="43" width="13" height="1.5" fill="#6f9fc8" opacity="0.8"/><rect x="53" y="43" width="4" height="1.5" fill="#b8b890" opacity="0.8"/><rect x="58" y="43" width="12" height="1.5" fill="#6f9fc8" opacity="0.8"/><rect x="6" y="45" width="9" height="1.5" fill="#a0a0a0" opacity="0.8"/><rect x="15" y="45" width="10" height="1.5" fill="#b8b890" opacity="0.8"/><rect x="26" y="45" width="9" height="1.5" fill="#a0a0a0" opacity="0.8"/><rect x="35" y="45" width="12" height="1.5" fill="#b8b890" opacity="0.8"/><rect x="48" y="45" width="6" height="1.5" fill="#a0a0a0" opacity="0.8"/><rect x="4" y="47" width="10" height="1.5" fill="#b8b890" opacity="0.8"/><rect x="14" y="47" width="10" height="1.5" fill="#6f9fc8" opacity="0.8"/><rect x="24" y="47" width="13" height="1.5" fill="#a0a0a0" opacity="0.8"/><rect x="37" y="47" width="7" height="1.5" fill="#6f9fc8" opacity="0.8"/><rect x="44" y="47" width="5" height="1.5" fill="#6f9fc8" opacity="0.8"/><rect x="2" y="49" width="10" height="1.5" fill="#b8b890" opacity="0.8"/><rect x="12" y="49" width="10" height="1.5" fill="#6f9fc8" opacity="0.8"/><rect x="22" y="49" width="7" height="1.5" fill="#6f9fc8" opacity="0.8"/><rect x="30" y="49" width="5" height="1.5" fill="#b08060" opacity="0.8"/><rect x="4" y="51" width="4" height="1.5" fill="#b8b890" opacity="0.8"/><rect x="8" y="51" width="7" height="1.5" fill="#6f9fc8" opacity="0.8"/><rect x="16" y="51" width="8" height="1.5" fill="#6f9fc8" opacity="0.8"/><rect x="25" y="51" width="11" height="1.5" fill="#b8b890" opacity="0.8"/><rect x="37" y="51" width="8" height="1.5" fill="#6f9fc8" opacity="0.8"/><rect x="46" y="51" width="12" height="1.5" fill="#6f9fc8" opacity="0.8"/><rect x="58" y="51" width="3" height="1.5" fill="#6f9fc8" opacity="0.8"/><rect x="62" y="51" width="5" height="1.5" fill="#b8b890" opacity="0.8"/><rect x="2" y="53" width="9" height="1.5" fill="#b08060" opacity="0.8"/><rect x="12" y="53" width="10" height="1.5" fill="#b08060" opacity="0.8"/><rect x="23" y="53" width="6" height="1.5" fill="#6f9fc8" opacity="0.8"/><rect x="30" y="53" width="4" height="1.5" fill="#6f9fc8" opacity="0.8"/><rect x="34" y="53" width="9" height="1.5" fill="#6f9fc8" opacity="0.8"/><rect x="44" y="53" width="3" height="1.5" fill="#6f9fc8" opacity="0.8"/><rect x="4" y="55" width="10" height="1.5" fill="#6f9fc8" opacity="0.8"/><rect x="15" y="55" width="5" height="1.5" fill="#b08060" opacity="0.8"/><rect x="21" y="55" width="11" height="1.5" fill="#b8b890" opacity="0.8"/><rect x="32" y="55" width="6" height="1.5" fill="#6f9fc8" opacity="0.8"/><rect x="38" y="55" width="4" height="1.5" fill="#b8b890" opacity="0.8"/><rect x="43" y="55" width="9" height="1.5" fill="#b8b890" opacity="0.8"/><rect x="53" y="55" width="2" height="1.5" fill="#b8b890" opacity="0.8"/><rect x="2" y="57" width="13" height="1.5" fill="#b8b890" opacity="0.8"/><rect x="16" y="57" width="5" height="1.5" fill="#6f9fc8" opacity="0.8"/><rect x="22" y="57" width="10" height="1.5" fill="#6f9fc8" opacity="0.8"/><rect x="32" y="57" width="12" height="1.5" fill="#6f9fc8" opacity="0.8"/><rect x="45" y="57" width="5" height="1.5" fill="#b8b890" opacity="0.8"/><rect x="51" y="57" width="6" height="1.5" fill="#b8b890" opacity="0.8"/><rect x="58" y="57" width="1" height="1.5" fill="#b08060" opacity="0.8"/><rect x="4" y="63" width="12" height="1.5" fill="#6f9fc8" opacity="0.8"/><rect x="16" y="63" width="9" height="1.5" fill="#b8b890" opacity="0.8"/><rect x="26" y="63" width="13" height="1.5" fill="#b08060" opacity="0.8"/><rect x="40" y="63" width="5" height="1.5" fill="#6f9fc8" opacity="0.8"/><rect x="2" y="65" width="12" height="1.5" fill="#6f9fc8" opacity="0.8"/><rect x="15" y="65" width="11" height="1.5" fill="#6f9fc8" opacity="0.8"/><rect x="27" y="65" width="2" height="1.5" fill="#6f9fc8" opacity="0.8"/><rect x="2" y="67" width="5" height="1.5" fill="#6f9fc8" opacity="0.8"/><rect x="8" y="67" width="10" height="1.5" fill="#b08060" opacity="0.8"/><rect x="18" y="67" width="5" height="1.5" fill="#b8b890" opacity="0.8"/><rect x="24" y="67" width="8" height="1.5" fill="#b8b890" opacity="0.8"/><rect x="33" y="67" width="13" height="1.5" fill="#b8b890" opacity="0.8"/><rect x="46" y="67" width="4" height="1.5" fill="#b08060" opacity="0.8"/><rect x="50" y="67" width="3" height="1.5" fill="#b08060" opacity="0.8"/><rect x="2" y="69" width="11" height="1.5" fill="#b8b890" opacity="0.8"/><rect x="14" y="69" width="9" height="1.5" fill="#b8b890" opacity="0.8"/><rect x="23" y="69" width="9" height="1.5" fill="#6f9fc8" opacity="0.8"/><rect x="33" y="69" width="4" height="1.5" fill="#b8b890" opacity="0.8"/><rect x="38" y="69" width="10" height="1.5" fill="#6f9fc8" opacity="0.8"/><rect x="48" y="69" width="12" height="1.5" fill="#b08060" opacity="0.8"/><rect x="61" y="69" width="6" height="1.5" fill="#6f9fc8" opacity="0.8"/><rect x="68" y="69" width="2" height="1.5" fill="#6f9fc8" opacity="0.8"/><rect x="4" y="71" width="8" height="1.5" fill="#6f9fc8" opacity="0.8"/><rect x="13" y="71" width="9" height="1.5" fill="#6f9fc8" opacity="0.8"/><rect x="23" y="71" width="3" height="1.5" fill="#6f9fc8" opacity="0.8"/><rect x="27" y="71" width="5" height="1.5" fill="#b08060" opacity="0.8"/><rect x="32" y="71" width="4" height="1.5" fill="#b8b890" opacity="0.8"/><rect x="36" y="71" width="5" height="1.5" fill="#6f9fc8" opacity="0.8"/><rect x="41" y="71" width="3" height="1.5" fill="#b08060" opacity="0.8"/><rect x="45" y="71" width="13" height="1.5" fill="#6f9fc8" opacity="0.8"/><rect x="58" y="71" width="9" height="1.5" fill="#b08060" opacity="0.8"/><rect x="68" y="71" width="5" height="1.5" fill="#b08060" opacity="0.8"/><rect x="2" y="73" width="5" height="1.5" fill="#b8b890" opacity="0.8"/><rect x="7" y="73" width="8" height="1.5" fill="#6f9a5f" opacity="0.8"/><rect x="16" y="73" width="5" height="1.5" fill="#4f7fb8" opacity="0.8"/><rect x="21" y="73" width="7" height="1.5" fill="#b8b890" opacity="0.8"/><rect x="29" y="73" width="3" height="1.5" fill="#b8b890" opacity="0.8"/><rect x="2" y="75" width="8" height="1.5" fill="#4f7fb8" opacity="0.8"/><rect x="10" y="75" width="3" height="1.5" fill="#6f9a5f" opacity="0.8"/><rect x="14" y="75" width="5" height="1.5" fill="#6f9fc8" opacity="0.8"/><rect x="20" y="75" width="8" height="1.5" fill="#4f7fb8" opacity="0.8"/><rect x="29" y="75" width="13" height="1.5" fill="#b8b890" opacity="0.8"/><rect x="2" y="77" width="3" height="1.5" fill="#b8b890" opacity="0.8"/><rect x="6" y="77" width="4" height="1.5" fill="#6f9a5f" opacity="0.8"/><rect x="11" y="77" width="8" height="1.5" fill="#4f7fb8" opacity="0.8"/><rect x="19" y="77" width="10" height="1.5" fill="#4f7fb8" opacity="0.8"/><rect x="30" y="77" width="2" height="1.5" fill="#6f9a5f" opacity="0.8"/><rect x="2" y="79" width="6" height="1.5" fill="#6f9fc8" opacity="0.8"/><rect x="9" y="79" width="12" height="1.5" fill="#6f9a5f" opacity="0.8"/><rect x="22" y="79" width="7" height="1.5" fill="#6f9fc8" opacity="0.8"/><rect x="30" y="79" width="3" height="1.5" fill="#6f9a5f" opacity="0.8"/><rect x="34" y="79" width="9" height="1.5" fill="#b8b890" opacity="0.8"/><rect x="43" y="79" width="3" height="1.5" fill="#4f7fb8" opacity="0.8"/><rect x="46" y="79" width="4" height="1.5" fill="#b8b890" opacity="0.8"/><rect x="51" y="79" width="4" height="1.5" fill="#6f9a5f" opacity="0.8"/><rect x="55" y="79" width="8" height="1.5" fill="#b8b890" opacity="0.8"/><rect x="2" y="83" width="7" height="1.5" fill="#6f9a5f" opacity="0.8"/><rect x="10" y="83" width="7" height="1.5" fill="#6f9fc8" opacity="0.8"/><rect x="17" y="83" width="6" height="1.5" fill="#b8b890" opacity="0.8"/><rect x="2" y="85" width="11" height="1.5" fill="#b8b890" opacity="0.8"/><rect x="13" y="85" width="8" height="1.5" fill="#6f9fc8" opacity="0.8"/><rect x="21" y="85" width="11" height="1.5" fill="#b8b890" opacity="0.8"/><rect x="4" y="89" width="10" height="1.5" fill="#4f7fb8" opacity="0.8"/><rect x="15" y="89" width="6" height="1.5" fill="#6f9a5f" opacity="0.8"/><rect x="4" y="91" width="7" height="1.5" fill="#6f9a5f" opacity="0.8"/><rect x="11" y="91" width="9" height="1.5" fill="#6f9fc8" opacity="0.8"/><rect x="2" y="93" width="9" height="1.5" fill="#4f7fb8" opacity="0.8"/><rect x="11" y="93" width="5" height="1.5" fill="#6f9fc8" opacity="0.8"/><rect x="17" y="93" width="6" height="1.5" fill="#6f9fc8" opacity="0.8"/><rect x="24" y="93" width="12" height="1.5" fill="#b8b890" opacity="0.8"/><rect x="2" y="97" width="6" height="1.5" fill="#4f7fb8" opacity="0.8"/><rect x="9" y="97" width="4" height="1.5" fill="#6f9fc8" opacity="0.8"/><rect x="14" y="97" width="8" height="1.5" fill="#6f9a5f" opacity="0.8"/><rect x="23" y="97" width="3" height="1.5" fill="#4f7fb8" opacity="0.8"/><rect x="27" y="97" width="5" height="1.5" fill="#6f9fc8" opacity="0.8"/><rect x="33" y="97" width="5" height="1.5" fill="#6f9fc8" opacity="0.8"/><rect x="39" y="97" width="3" height="1.5" fill="#6f9a5f" opacity="0.8"/><rect x="43" y="97" width="4" height="1.5" fill="#6f9a5f" opacity="0.8"/><rect x="48" y="97" width="5" height="1.5" fill="#4f7fb8" opacity="0.8"/><rect x="53" y="97" width="7" height="1.5" fill="#b8b890" opacity="0.8"/><rect x="60" y="97" width="5" height="1.5" fill="#6f9a5f" opacity="0.8"/><rect x="6" y="99" width="11" height="1.5" fill="#b08060" opacity="0.8"/><rect x="18" y="99" width="3" height="1.5" fill="#6f9fc8" opacity="0.8"/><rect x="21" y="99" width="3" height="1.5" fill="#6f9fc8" opacity="0.8"/><rect x="25" y="99" width="9" height="1.5" fill="#b8b890" opacity="0.8"/><rect x="6" y="103" width="6" height="1.5" fill="#b8b890" opacity="0.8"/><rect x="13" y="103" width="3" height="1.5" fill="#6f9fc8" opacity="0.8"/><rect x="17" y="103" width="12" height="1.5" fill="#6f9fc8" opacity="0.8"/><rect x="30" y="103" width="4" height="1.5" fill="#b8b890" opacity="0.8"/><rect x="35" y="103" width="12" height="1.5" fill="#6f9fc8" opacity="0.8"/><rect x="48" y="103" width="5" height="1.5" fill="#b8b890" opacity="0.8"/><rect x="6" y="105" width="8" height="1.5" fill="#b8b890" opacity="0.8"/><rect x="14" y="105" width="10" height="1.5" fill="#b08060" opacity="0.8"/><rect x="25" y="105" width="5" height="1.5" fill="#b8b890" opacity="0.8"/><rect x="30" y="105" width="13" height="1.5" fill="#6f9fc8" opacity="0.8"/><rect x="44" y="105" width="7" height="1.5" fill="#b8b890" opacity="0.8"/><rect x="6" y="109" width="3" height="1.5" fill="#6f9fc8" opacity="0.8"/><rect x="9" y="109" width="3" height="1.5" fill="#b08060" opacity="0.8"/><rect x="12" y="109" width="10" height="1.5" fill="#b08060" opacity="0.8"/><rect x="23" y="109" width="9" height="1.5" fill="#b8b890" opacity="0.8"/><rect x="32" y="109" width="6" height="1.5" fill="#b8b890" opacity="0.8"/><rect x="38" y="109" width="7" height="1.5" fill="#b08060" opacity="0.8"/><rect x="46" y="109" width="8" height="1.5" fill="#6f9fc8" opacity="0.8"/><rect x="55" y="109" width="8" height="1.5" fill="#6f9fc8" opacity="0.8"/><rect x="64" y="109" width="3" height="1.5" fill="#b08060" opacity="0.8"/><rect x="68" y="109" width="5" height="1.5" fill="#b8b890" opacity="0.8"/><rect x="0" y="115" width="4" height="1.5" fill="#b8b890" opacity="0.8"/><rect x="0" y="119" width="13" height="1.5" fill="#b8b890" opacity="0.8"/><rect x="14" y="119" width="12" height="1.5" fill="#4f7fb8" opacity="0.8"/><rect x="26" y="119" width="9" height="1.5" fill="#4f7fb8" opacity="0.8"/><rect x="35" y="119" width="5" height="1.5" fill="#4f7fb8" opacity="0.8"/><rect x="2" y="121" width="12" height="1.5" fill="#b8b890" opacity="0.8"/><rect x="15" y="121" width="9" height="1.5" fill="#b8b890" opacity="0.8"/><rect x="4" y="123" width="12" height="1.5" fill="#6f9fc8" opacity="0.8"/><rect x="17" y="123" width="13" height="1.5" fill="#6f9fc8" opacity="0.8"/><rect x="31" y="123" width="5" height="1.5" fill="#b8b890" opacity="0.8"/><rect x="37" y="123" width="12" height="1.5" fill="#6f9fc8" opacity="0.8"/><rect x="50" y="123" width="3" height="1.5" fill="#6f9fc8" opacity="0.8"/><rect x="4" y="125" width="8" height="1.5" fill="#6f9fc8" opacity="0.8"/><rect x="13" y="125" width="9" height="1.5" fill="#b8b890" opacity="0.8"/><rect x="22" y="125" width="7" height="1.5" fill="#6f9fc8" opacity="0.8"/><rect x="29" y="125" width="1" height="1.5" fill="#6f9fc8" opacity="0.8"/><rect x="4" y="127" width="12" height="1.5" fill="#6f9fc8" opacity="0.8"/><rect x="17" y="127" width="6" height="1.5" fill="#b8b890" opacity="0.8"/><rect x="24" y="127" width="4" height="1.5" fill="#6f9fc8" opacity="0.8"/><rect x="28" y="127" width="8" height="1.5" fill="#6f9fc8" opacity="0.8"/><rect x="37" y="127" width="9" height="1.5" fill="#6f9fc8" opacity="0.8"/><rect x="4" y="129" width="13" height="1.5" fill="#6f9fc8" opacity="0.8"/><rect x="17" y="129" width="13" height="1.5" fill="#6f9fc8" opacity="0.8"/><rect x="31" y="129" width="9" height="1.5" fill="#b8b890" opacity="0.8"/><rect x="40" y="129" width="11" height="1.5" fill="#6f9fc8" opacity="0.8"/><rect x="52" y="129" width="8" height="1.5" fill="#6f9fc8" opacity="0.8"/><rect x="60" y="129" width="6" height="1.5" fill="#b8b890" opacity="0.8"/><rect x="67" y="129" width="6" height="1.5" fill="#6f9fc8" opacity="0.8"/><rect x="4" y="131" width="13" height="1.5" fill="#b8b890" opacity="0.8"/><rect x="17" y="131" width="6" height="1.5" fill="#6f9fc8" opacity="0.8"/><rect x="23" y="131" width="6" height="1.5" fill="#6f9fc8" opacity="0.8"/><rect x="6" y="133" width="9" height="1.5" fill="#b8b890" opacity="0.8"/><rect x="15" y="133" width="9" height="1.5" fill="#b8b890" opacity="0.8"/><rect x="25" y="133" width="12" height="1.5" fill="#6f9fc8" opacity="0.8"/><rect x="38" y="133" width="9" height="1.5" fill="#b8b890" opacity="0.8"/><rect x="47" y="133" width="12" height="1.5" fill="#b8b890" opacity="0.8"/><rect x="59" y="133" width="9" height="1.5" fill="#6f9fc8" opacity="0.8"/><rect x="68" y="133" width="3" height="1.5" fill="#b8b890" opacity="0.8"/><rect x="6" y="135" width="9" height="1.5" fill="#6f9a5f" opacity="0.8"/><rect x="16" y="135" width="12" height="1.5" fill="#6f9a5f" opacity="0.8"/><rect x="29" y="135" width="8" height="1.5" fill="#b8b890" opacity="0.8"/><rect x="37" y="135" width="3" height="1.5" fill="#6f9a5f" opacity="0.8"/><rect x="40" y="135" width="11" height="1.5" fill="#6f9a5f" opacity="0.8"/><rect x="52" y="135" width="6" height="1.5" fill="#6f9a5f" opacity="0.8"/><rect x="59" y="135" width="3" height="1.5" fill="#6f9a5f" opacity="0.8"/><rect x="4" y="137" width="4" height="1.5" fill="#6f9a5f" opacity="0.8"/><rect x="8" y="137" width="13" height="1.5" fill="#6f9a5f" opacity="0.8"/><rect x="21" y="137" width="4" height="1.5" fill="#6f9a5f" opacity="0.8"/><rect x="25" y="137" width="8" height="1.5" fill="#b8b890" opacity="0.8"/><rect x="33" y="137" width="12" height="1.5" fill="#6f9a5f" opacity="0.8"/><rect x="46" y="137" width="8" height="1.5" fill="#6f9a5f" opacity="0.8"/><rect x="55" y="137" width="11" height="1.5" fill="#b8b890" opacity="0.8"/><rect x="67" y="137" width="4" height="1.5" fill="#6f9a5f" opacity="0.8"/><rect x="71" y="137" width="2" height="1.5" fill="#6f9a5f" opacity="0.8"/><rect x="2" y="139" width="13" height="1.5" fill="#6f9fc8" opacity="0.8"/><rect x="15" y="139" width="9" height="1.5" fill="#b8b890" opacity="0.8"/><rect x="25" y="139" width="3" height="1.5" fill="#6f9fc8" opacity="0.8"/><rect x="2" y="141" width="10" height="1.5" fill="#b8b890" opacity="0.8"/><rect x="13" y="141" width="2" height="1.5" fill="#b8b890" opacity="0.8"/><rect x="2" y="143" width="10" height="1.5" fill="#b8b890" opacity="0.8"/><rect x="13" y="143" width="5" height="1.5" fill="#b8b890" opacity="0.8"/><rect x="4" y="145" width="4" height="1.5" fill="#b08060" opacity="0.8"/><rect x="9" y="145" width="9" height="1.5" fill="#b8b890" opacity="0.8"/><rect x="18" y="145" width="11" height="1.5" fill="#b8b890" opacity="0.8"/><rect x="29" y="145" width="6" height="1.5" fill="#b8b890" opacity="0.8"/><rect x="35" y="145" width="7" height="1.5" fill="#b08060" opacity="0.8"/><rect x="42" y="145" width="7" height="1.5" fill="#b08060" opacity="0.8"/><rect x="50" y="145" width="10" height="1.5" fill="#b8b890" opacity="0.8"/><rect x="60" y="145" width="10" height="1.5" fill="#b8b890" opacity="0.8"/><rect x="4" y="147" width="4" height="1.5" fill="#b08060" opacity="0.8"/><rect x="8" y="147" width="8" height="1.5" fill="#b08060" opacity="0.8"/><rect x="16" y="147" width="7" height="1.5" fill="#b8b890" opacity="0.8"/><rect x="24" y="147" width="11" height="1.5" fill="#b08060" opacity="0.8"/><rect x="35" y="147" width="6" height="1.5" fill="#b08060" opacity="0.8"/><rect x="42" y="147" width="3" height="1.5" fill="#b8b890" opacity="0.8"/><rect x="46" y="147" width="4" height="1.5" fill="#b8b890" opacity="0.8"/><rect x="51" y="147" width="11" height="1.5" fill="#b8b890" opacity="0.8"/><rect x="4" y="153" width="12" height="1.5" fill="#6f9fc8" opacity="0.8"/><rect x="16" y="153" width="3" height="1.5" fill="#b8b890" opacity="0.8"/><rect x="20" y="153" width="9" height="1.5" fill="#b8b890" opacity="0.8"/><rect x="30" y="153" width="3" height="1.5" fill="#6f9fc8" opacity="0.8"/><rect x="34" y="153" width="5" height="1.5" fill="#b8b890" opacity="0.8"/><rect x="39" y="153" width="4" height="1.5" fill="#6f9fc8" opacity="0.8"/><rect x="2" y="155" width="7" height="1.5" fill="#6f9fc8" opacity="0.8"/><rect x="10" y="155" width="8" height="1.5" fill="#b8b890" opacity="0.8"/><rect x="18" y="155" width="13" height="1.5" fill="#6f9fc8" opacity="0.8"/><rect x="31" y="155" width="5" height="1.5" fill="#6f9fc8" opacity="0.8"/><rect x="4" y="157" width="5" height="1.5" fill="#b8b890" opacity="0.8"/><rect x="10" y="157" width="3" height="1.5" fill="#a0a0a0" opacity="0.8"/><rect x="14" y="157" width="12" height="1.5" fill="#a0a0a0" opacity="0.8"/><rect x="26" y="157" width="10" height="1.5" fill="#b8b890" opacity="0.8"/><rect x="36" y="157" width="8" height="1.5" fill="#6f9fc8" opacity="0.8"/><rect x="44" y="157" width="5" height="1.5" fill="#a0a0a0" opacity="0.8"/><rect x="49" y="157" width="7" height="1.5" fill="#b8b890" opacity="0.8"/><rect x="57" y="157" width="4" height="1.5" fill="#b08060" opacity="0.8"/><rect x="6" y="159" width="4" height="1.5" fill="#b08060" opacity="0.8"/><rect x="10" y="159" width="4" height="1.5" fill="#a0a0a0" opacity="0.8"/><rect x="15" y="159" width="7" height="1.5" fill="#b08060" opacity="0.8"/><rect x="23" y="159" width="11" height="1.5" fill="#a0a0a0" opacity="0.8"/><rect x="34" y="159" width="12" height="1.5" fill="#b8b890" opacity="0.8"/><rect x="47" y="159" width="3" height="1.5" fill="#6f9fc8" opacity="0.8"/><rect x="51" y="159" width="9" height="1.5" fill="#b8b890" opacity="0.8"/><rect x="60" y="159" width="10" height="1.5" fill="#6f9fc8" opacity="0.8"/><rect x="4" y="163" width="12" height="1.5" fill="#b8b890" opacity="0.8"/><rect x="17" y="163" width="3" height="1.5" fill="#b8b890" opacity="0.8"/><rect x="20" y="163" width="9" height="1.5" fill="#b08060" opacity="0.8"/><rect x="29" y="163" width="11" height="1.5" fill="#b08060" opacity="0.8"/><rect x="41" y="163" width="10" height="1.5" fill="#6f9fc8" opacity="0.8"/><rect x="52" y="163" width="4" height="1.5" fill="#b08060" opacity="0.8"/><rect x="57" y="163" width="10" height="1.5" fill="#b08060" opacity="0.8"/><rect x="6" y="165" width="9" height="1.5" fill="#b08060" opacity="0.8"/><rect x="15" y="165" width="12" height="1.5" fill="#6f9fc8" opacity="0.8"/><rect x="28" y="165" width="10" height="1.5" fill="#6f9fc8" opacity="0.8"/><rect x="39" y="165" width="6" height="1.5" fill="#a0a0a0" opacity="0.8"/><rect x="45" y="165" width="11" height="1.5" fill="#b08060" opacity="0.8"/><rect x="57" y="165" width="2" height="1.5" fill="#a0a0a0" opacity="0.8"/><rect x="4" y="167" width="3" height="1.5" fill="#b8b890" opacity="0.8"/><rect x="8" y="167" width="10" height="1.5" fill="#6f9fc8" opacity="0.8"/><rect x="18" y="167" width="4" height="1.5" fill="#6f9fc8" opacity="0.8"/><rect x="23" y="167" width="5" height="1.5" fill="#b08060" opacity="0.8"/><rect x="29" y="167" width="7" height="1.5" fill="#b08060" opacity="0.8"/><rect x="37" y="167" width="5" height="1.5" fill="#6f9fc8" opacity="0.8"/><rect x="43" y="167" width="7" height="1.5" fill="#6f9fc8" opacity="0.8"/><rect x="51" y="167" width="7" height="1.5" fill="#a0a0a0" opacity="0.8"/><rect x="58" y="167" width="8" height="1.5" fill="#b8b890" opacity="0.8"/><rect x="4" y="169" width="12" height="1.5" fill="#b8b890" opacity="0.8"/><rect x="17" y="169" width="3" height="1.5" fill="#b08060" opacity="0.8"/><rect x="21" y="169" width="4" height="1.5" fill="#6f9fc8" opacity="0.8"/><rect x="26" y="169" width="3" height="1.5" fill="#a0a0a0" opacity="0.8"/><rect x="30" y="169" width="13" height="1.5" fill="#6f9fc8" opacity="0.8"/><rect x="43" y="169" width="3" height="1.5" fill="#a0a0a0" opacity="0.8"/><rect x="6" y="171" width="12" height="1.5" fill="#b8b890" opacity="0.8"/><rect x="19" y="171" width="4" height="1.5" fill="#6f9fc8" opacity="0.8"/><rect x="24" y="171" width="13" height="1.5" fill="#6f9fc8" opacity="0.8"/><rect x="37" y="171" width="4" height="1.5" fill="#a0a0a0" opacity="0.8"/><rect x="42" y="171" width="13" height="1.5" fill="#6f9fc8" opacity="0.8"/><rect x="56" y="171" width="7" height="1.5" fill="#b08060" opacity="0.8"/><rect x="4" y="173" width="10" height="1.5" fill="#b08060" opacity="0.8"/><rect x="15" y="173" width="3" height="1.5" fill="#b08060" opacity="0.8"/><rect x="19" y="173" width="13" height="1.5" fill="#a0a0a0" opacity="0.8"/><rect x="33" y="173" width="9" height="1.5" fill="#b8b890" opacity="0.8"/><rect x="43" y="173" width="6" height="1.5" fill="#b08060" opacity="0.8"/><rect x="50" y="173" width="1" height="1.5" fill="#b8b890" opacity="0.8"/><rect x="4" y="175" width="13" height="1.5" fill="#a0a0a0" opacity="0.8"/><rect x="18" y="175" width="12" height="1.5" fill="#a0a0a0" opacity="0.8"/><rect x="30" y="175" width="6" height="1.5" fill="#b8b890" opacity="0.8"/><rect x="37" y="175" width="3" height="1.5" fill="#a0a0a0" opacity="0.8"/><rect x="4" y="177" width="9" height="1.5" fill="#b08060" opacity="0.8"/><rect x="14" y="177" width="10" height="1.5" fill="#b8b890" opacity="0.8"/><rect x="25" y="177" width="6" height="1.5" fill="#b8b890" opacity="0.8"/><rect x="32" y="177" width="11" height="1.5" fill="#b08060" opacity="0.8"/><rect x="4" y="179" width="7" height="1.5" fill="#a0a0a0" opacity="0.8"/><rect x="12" y="179" width="11" height="1.5" fill="#b08060" opacity="0.8"/><rect x="24" y="179" width="13" height="1.5" fill="#6f9fc8" opacity="0.8"/><rect x="37" y="179" width="4" height="1.5" fill="#b08060" opacity="0.8"/><rect x="41" y="179" width="4" height="1.5" fill="#b08060" opacity="0.8"/><rect x="46" y="179" width="1" height="1.5" fill="#6f9fc8" opacity="0.8"/><rect x="6" y="181" width="7" height="1.5" fill="#6f9fc8" opacity="0.8"/><rect x="14" y="181" width="8" height="1.5" fill="#6f9fc8" opacity="0.8"/><rect x="23" y="181" width="4" height="1.5" fill="#b08060" opacity="0.8"/><rect x="28" y="181" width="8" height="1.5" fill="#a0a0a0" opacity="0.8"/><rect x="37" y="181" width="4" height="1.5" fill="#6f9fc8" opacity="0.8"/><rect x="42" y="181" width="4" height="1.5" fill="#b8b890" opacity="0.8"/><rect x="46" y="181" width="4" height="1.5" fill="#a0a0a0" opacity="0.8"/><rect x="50" y="181" width="6" height="1.5" fill="#a0a0a0" opacity="0.8"/><rect x="4" y="183" width="11" height="1.5" fill="#b08060" opacity="0.8"/><rect x="16" y="183" width="4" height="1.5" fill="#b08060" opacity="0.8"/><rect x="21" y="183" width="4" height="1.5" fill="#a0a0a0" opacity="0.8"/><rect x="26" y="183" width="4" height="1.5" fill="#b8b890" opacity="0.8"/><rect x="30" y="183" width="4" height="1.5" fill="#6f9fc8" opacity="0.8"/><rect x="34" y="183" width="13" height="1.5" fill="#a0a0a0" opacity="0.8"/><rect x="48" y="183" width="4" height="1.5" fill="#b08060" opacity="0.8"/><rect x="53" y="183" width="11" height="1.5" fill="#a0a0a0" opacity="0.8"/><rect x="65" y="183" width="3" height="1.5" fill="#b8b890" opacity="0.8"/><rect x="69" y="183" width="2" height="1.5" fill="#a0a0a0" opacity="0.8"/><rect x="8" y="187" width="11" height="1.5" fill="#b8b890" opacity="0.8"/><rect x="19" y="187" width="7" height="1.5" fill="#b8b890" opacity="0.8"/><rect x="27" y="187" width="10" height="1.5" fill="#b08060" opacity="0.8"/><rect x="38" y="187" width="11" height="1.5" fill="#b08060" opacity="0.8"/><rect x="50" y="187" width="5" height="1.5" fill="#b08060" opacity="0.8"/><rect x="10" y="189" width="4" height="1.5" fill="#6f9fc8" opacity="0.8"/><rect x="15" y="189" width="6" height="1.5" fill="#a0a0a0" opacity="0.8"/><rect x="22" y="189" width="4" height="1.5" fill="#a0a0a0" opacity="0.8"/><rect x="26" y="189" width="5" height="1.5" fill="#6f9fc8" opacity="0.8"/><rect x="31" y="189" width="13" height="1.5" fill="#b8b890" opacity="0.8"/><rect x="45" y="189" width="10" height="1.5" fill="#b08060" opacity="0.8"/><rect x="56" y="189" width="10" height="1.5" fill="#6f9fc8" opacity="0.8"/><rect x="67" y="189" width="6" height="1.5" fill="#b8b890" opacity="0.8"/><rect x="8" y="191" width="3" height="1.5" fill="#b8b890" opacity="0.8"/><rect x="11" y="191" width="3" height="1.5" fill="#b08060" opacity="0.8"/><rect x="15" y="191" width="12" height="1.5" fill="#a0a0a0" opacity="0.8"/><rect x="28" y="191" width="10" height="1.5" fill="#b08060" opacity="0.8"/><rect x="39" y="191" width="8" height="1.5" fill="#b8b890" opacity="0.8"/><rect x="48" y="191" width="5" height="1.5" fill="#a0a0a0" opacity="0.8"/><rect x="54" y="191" width="3" height="1.5" fill="#b08060" opacity="0.8"/><rect x="8" y="193" width="3" height="1.5" fill="#a0a0a0" opacity="0.8"/><rect x="11" y="193" width="7" height="1.5" fill="#a0a0a0" opacity="0.8"/><rect x="19" y="193" width="7" height="1.5" fill="#a0a0a0" opacity="0.8"/><rect x="27" y="193" width="10" height="1.5" fill="#a0a0a0" opacity="0.8"/><rect x="10" y="195" width="8" height="1.5" fill="#b8b890" opacity="0.8"/><rect x="18" y="195" width="12" height="1.5" fill="#a0a0a0" opacity="0.8"/><rect x="31" y="195" width="3" height="1.5" fill="#a0a0a0" opacity="0.8"/><rect x="35" y="195" width="8" height="1.5" fill="#b8b890" opacity="0.8"/><rect x="43" y="195" width="11" height="1.5" fill="#b8b890" opacity="0.8"/><rect x="55" y="195" width="4" height="1.5" fill="#6f9fc8" opacity="0.8"/><rect x="59" y="195" width="5" height="1.5" fill="#6f9fc8" opacity="0.8"/><rect x="65" y="195" width="2" height="1.5" fill="#b8b890" opacity="0.8"/><rect x="8" y="197" width="3" height="1.5" fill="#6f9fc8" opacity="0.8"/><rect x="12" y="197" width="6" height="1.5" fill="#b8b890" opacity="0.8"/><rect x="19" y="197" width="11" height="1.5" fill="#b08060" opacity="0.8"/><rect x="31" y="197" width="12" height="1.5" fill="#b08060" opacity="0.8"/><rect x="43" y="197" width="4" height="1.5" fill="#b08060" opacity="0.8"/><rect x="48" y="197" width="4" height="1.5" fill="#a0a0a0" opacity="0.8"/><rect x="8" y="199" width="3" height="1.5" fill="#6f9fc8" opacity="0.8"/><rect x="12" y="199" width="3" height="1.5" fill="#a0a0a0" opacity="0.8"/><rect x="15" y="199" width="6" height="1.5" fill="#6f9fc8" opacity="0.8"/><rect x="21" y="199" width="5" height="1.5" fill="#a0a0a0" opacity="0.8"/><rect x="27" y="199" width="10" height="1.5" fill="#a0a0a0" opacity="0.8"/><rect x="38" y="199" width="11" height="1.5" fill="#b8b890" opacity="0.8"/><rect x="49" y="199" width="12" height="1.5" fill="#a0a0a0" opacity="0.8"/><rect x="62" y="199" width="6" height="1.5" fill="#6f9fc8" opacity="0.8"/><rect x="8" y="201" width="6" height="1.5" fill="#b8b890" opacity="0.8"/><rect x="15" y="201" width="8" height="1.5" fill="#6f9fc8" opacity="0.8"/><rect x="23" y="201" width="11" height="1.5" fill="#b08060" opacity="0.8"/><rect x="34" y="201" width="5" height="1.5" fill="#6f9fc8" opacity="0.8"/><rect x="40" y="201" width="3" height="1.5" fill="#b8b890" opacity="0.8"/><rect x="44" y="201" width="3" height="1.5" fill="#b08060" opacity="0.8"/><rect x="47" y="201" width="9" height="1.5" fill="#a0a0a0" opacity="0.8"/><rect x="56" y="201" width="4" height="1.5" fill="#a0a0a0" opacity="0.8"/><rect x="61" y="201" width="6" height="1.5" fill="#6f9fc8" opacity="0.8"/><rect x="8" y="203" width="9" height="1.5" fill="#b8b890" opacity="0.8"/><rect x="18" y="203" width="10" height="1.5" fill="#6f9fc8" opacity="0.8"/><rect x="29" y="203" width="13" height="1.5" fill="#b08060" opacity="0.8"/><rect x="42" y="203" width="2" height="1.5" fill="#a0a0a0" opacity="0.8"/><rect x="4" y="205" width="10" height="1.5" fill="#6f9fc8" opacity="0.8"/><rect x="14" y="205" width="8" height="1.5" fill="#b8b890" opacity="0.8"/><rect x="23" y="205" width="13" height="1.5" fill="#6f9fc8" opacity="0.8"/><rect x="36" y="205" width="1" height="1.5" fill="#6f9fc8" opacity="0.8"/><rect x="4" y="207" width="9" height="1.5" fill="#b8b890" opacity="0.8"/><rect x="13" y="207" width="13" height="1.5" fill="#b8b890" opacity="0.8"/><rect x="26" y="207" width="3" height="1.5" fill="#6f9fc8" opacity="0.8"/><rect x="30" y="207" width="9" height="1.5" fill="#6f9fc8" opacity="0.8"/><rect x="2" y="211" width="10" height="1.5" fill="#6f9fc8" opacity="0.8"/><rect x="13" y="211" width="3" height="1.5" fill="#6f9fc8" opacity="0.8"/><rect x="17" y="211" width="5" height="1.5" fill="#b8b890" opacity="0.8"/><rect x="2" y="213" width="8" height="1.5" fill="#b08060" opacity="0.8"/><rect x="11" y="213" width="9" height="1.5" fill="#4f7fb8" opacity="0.8"/><rect x="21" y="213" width="3" height="1.5" fill="#b08060" opacity="0.8"/><rect x="0" y="215" width="10" height="1.5" fill="#b8b890" opacity="0.8"/><rect x="10" y="215" width="7" height="1.5" fill="#4f7fb8" opacity="0.8"/><rect x="0" y="217" width="12" height="1.5" fill="#b8b890" opacity="0.8"/><rect x="12" y="217" width="4" height="1.5" fill="#b08060" opacity="0.8"/><rect x="17" y="217" width="9" height="1.5" fill="#4f7fb8" opacity="0.8"/><rect x="27" y="217" width="3" height="1.5" fill="#4f7fb8" opacity="0.8"/><rect x="0" y="219" width="4" height="1.5" fill="#b08060" opacity="0.8"/><rect x="5" y="219" width="13" height="1.5" fill="#4f7fb8" opacity="0.8"/><rect x="18" y="219" width="8" height="1.5" fill="#b08060" opacity="0.8"/><rect x="0" y="223" width="12" height="1.5" fill="#b8b890" opacity="0.8"/><rect x="13" y="223" width="4" height="1.5" fill="#b08060" opacity="0.8"/><rect x="0" y="225" width="12" height="1.5" fill="#6f9fc8" opacity="0.8"/><rect x="0" y="227" width="4" height="1.5" fill="#6f9a5f" opacity="0.8"/><rect x="5" y="227" width="13" height="1.5" fill="#6f9fc8" opacity="0.8"/><rect x="18" y="227" width="5" height="1.5" fill="#6f9a5f" opacity="0.8"/><rect x="0" y="229" width="4" height="1.5" fill="#6f9fc8" opacity="0.8"/><rect x="5" y="229" width="3" height="1.5" fill="#6f9fc8" opacity="0.8"/><rect x="9" y="229" width="3" height="1.5" fill="#6f9a5f" opacity="0.8"/><rect x="13" y="229" width="7" height="1.5" fill="#6f9fc8" opacity="0.8"/><rect x="2" y="231" width="11" height="1.5" fill="#6f9a5f" opacity="0.8"/><rect x="14" y="231" width="7" height="1.5" fill="#6f9fc8" opacity="0.8"/><rect x="2" y="233" width="9" height="1.5" fill="#6f9a5f" opacity="0.8"/><rect x="11" y="233" width="4" height="1.5" fill="#6f9fc8" opacity="0.8"/><rect x="16" y="233" width="3" height="1.5" fill="#6f9fc8" opacity="0.8"/><rect x="20" y="233" width="2" height="1.5" fill="#6f9a5f" opacity="0.8"/><rect x="4" y="237" width="12" height="1.5" fill="#6f9fc8" opacity="0.8"/><rect x="17" y="237" width="3" height="1.5" fill="#6f9fc8" opacity="0.8"/><rect x="20" y="237" width="7" height="1.5" fill="#6f9a5f" opacity="0.8"/><rect x="28" y="237" width="4" height="1.5" fill="#b8b890" opacity="0.8"/><rect x="4" y="239" width="7" height="1.5" fill="#6f9fc8" opacity="0.8"/><rect x="12" y="239" width="8" height="1.5" fill="#6f9a5f" opacity="0.8"/><rect x="21" y="239" width="11" height="1.5" fill="#6f9a5f" opacity="0.8"/><rect x="33" y="239" width="10" height="1.5" fill="#6f9a5f" opacity="0.8"/><rect x="44" y="239" width="3" height="1.5" fill="#6f9fc8" opacity="0.8"/><rect x="48" y="239" width="10" height="1.5" fill="#b8b890" opacity="0.8"/><rect x="4" y="243" width="8" height="1.5" fill="#6f9a5f" opacity="0.8"/><rect x="12" y="243" width="9" height="1.5" fill="#b8b890" opacity="0.8"/><rect x="22" y="243" width="7" height="1.5" fill="#6f9fc8" opacity="0.8"/><rect x="29" y="243" width="11" height="1.5" fill="#b8b890" opacity="0.8"/><rect x="41" y="243" width="7" height="1.5" fill="#6f9fc8" opacity="0.8"/><rect x="48" y="243" width="5" height="1.5" fill="#6f9fc8" opacity="0.8"/><rect x="4" y="245" width="12" height="1.5" fill="#6f9fc8" opacity="0.8"/><rect x="17" y="245" width="12" height="1.5" fill="#6f9a5f" opacity="0.8"/><rect x="30" y="245" width="4" height="1.5" fill="#b8b890" opacity="0.8"/><rect x="35" y="245" width="3" height="1.5" fill="#6f9fc8" opacity="0.8"/><rect x="38" y="245" width="4" height="1.5" fill="#b8b890" opacity="0.8"/><rect x="6" y="247" width="3" height="1.5" fill="#6f9fc8" opacity="0.8"/><rect x="10" y="247" width="7" height="1.5" fill="#6f9fc8" opacity="0.8"/><rect x="18" y="247" width="8" height="1.5" fill="#6f9a5f" opacity="0.8"/><rect x="27" y="247" width="5" height="1.5" fill="#6f9fc8" opacity="0.8"/><rect x="32" y="247" width="6" height="1.5" fill="#b8b890" opacity="0.8"/><rect x="38" y="247" width="7" height="1.5" fill="#b8b890" opacity="0.8"/><rect x="46" y="247" width="6" height="1.5" fill="#6f9fc8" opacity="0.8"/><rect x="52" y="247" width="8" height="1.5" fill="#b8b890" opacity="0.8"/><rect x="60" y="247" width="2" height="1.5" fill="#b8b890" opacity="0.8"/><rect x="4" y="251" width="7" height="1.5" fill="#6f9fc8" opacity="0.8"/><rect x="11" y="251" width="4" height="1.5" fill="#6f9a5f" opacity="0.8"/><rect x="15" y="251" width="12" height="1.5" fill="#b8b890" opacity="0.8"/><rect x="28" y="251" width="7" height="1.5" fill="#b8b890" opacity="0.8"/><rect x="35" y="251" width="1" height="1.5" fill="#b8b890" opacity="0.8"/><rect x="2" y="253" width="10" height="1.5" fill="#b8b890" opacity="0.8"/><rect x="13" y="253" width="10" height="1.5" fill="#b8b890" opacity="0.8"/><rect x="23" y="253" width="11" height="1.5" fill="#b8b890" opacity="0.8"/><rect x="35" y="253" width="3" height="1.5" fill="#6f9fc8" opacity="0.8"/><rect x="2" y="255" width="7" height="1.5" fill="#b8b890" opacity="0.8"/><rect x="10" y="255" width="5" height="1.5" fill="#b8b890" opacity="0.8"/><rect x="16" y="255" width="4" height="1.5" fill="#b8b890" opacity="0.8"/><rect x="21" y="255" width="8" height="1.5" fill="#b8b890" opacity="0.8"/><rect x="30" y="255" width="7" height="1.5" fill="#b8b890" opacity="0.8"/><rect x="4" y="257" width="11" height="1.5" fill="#6f9a5f" opacity="0.8"/><rect x="16" y="257" width="8" height="1.5" fill="#6f9a5f" opacity="0.8"/><rect x="4" y="259" width="10" height="1.5" fill="#b8b890" opacity="0.8"/><rect x="15" y="259" width="3" height="1.5" fill="#6f9fc8" opacity="0.8"/><rect x="19" y="259" width="5" height="1.5" fill="#b8b890" opacity="0.8"/><rect x="2" y="261" width="6" height="1.5" fill="#b8b890" opacity="0.8"/><rect x="9" y="261" width="13" height="1.5" fill="#6f9fc8" opacity="0.8"/><rect x="4" y="263" width="6" height="1.5" fill="#b8b890" opacity="0.8"/><rect x="10" y="263" width="9" height="1.5" fill="#6f9fc8" opacity="0.8"/><rect x="4" y="267" width="10" height="1.5" fill="#6f9fc8" opacity="0.8"/><rect x="15" y="267" width="13" height="1.5" fill="#6f9a5f" opacity="0.8"/><rect x="29" y="267" width="7" height="1.5" fill="#6f9fc8" opacity="0.8"/><rect x="37" y="267" width="5" height="1.5" fill="#b08060" opacity="0.8"/><rect x="43" y="267" width="11" height="1.5" fill="#b08060" opacity="0.8"/><rect x="54" y="267" width="4" height="1.5" fill="#b08060" opacity="0.8"/><rect x="2" y="269" width="3" height="1.5" fill="#6f9a5f" opacity="0.8"/><rect x="5" y="269" width="11" height="1.5" fill="#6f9fc8" opacity="0.8"/><rect x="17" y="269" width="5" height="1.5" fill="#b08060" opacity="0.8"/><rect x="23" y="269" width="9" height="1.5" fill="#6f9a5f" opacity="0.8"/><rect x="33" y="269" width="12" height="1.5" fill="#b08060" opacity="0.8"/><rect x="46" y="269" width="7" height="1.5" fill="#6f9fc8" opacity="0.8"/><rect x="4" y="271" width="6" height="1.5" fill="#b08060" opacity="0.8"/><rect x="10" y="271" width="12" height="1.5" fill="#6f9fc8" opacity="0.8"/><rect x="23" y="271" width="5" height="1.5" fill="#6f9a5f" opacity="0.8"/><rect x="29" y="271" width="3" height="1.5" fill="#6f9fc8" opacity="0.8"/><rect x="33" y="271" width="5" height="1.5" fill="#6f9a5f" opacity="0.8"/><rect x="39" y="271" width="7" height="1.5" fill="#6f9fc8" opacity="0.8"/><rect x="47" y="271" width="8" height="1.5" fill="#6f9a5f" opacity="0.8"/><rect x="56" y="271" width="4" height="1.5" fill="#b08060" opacity="0.8"/><rect x="2" y="275" width="10" height="1.5" fill="#6f9a5f" opacity="0.8"/><rect x="12" y="275" width="10" height="1.5" fill="#6f9a5f" opacity="0.8"/><rect x="23" y="275" width="5" height="1.5" fill="#6f9a5f" opacity="0.8"/><rect x="29" y="275" width="10" height="1.5" fill="#b08060" opacity="0.8"/><rect x="39" y="275" width="5" height="1.5" fill="#b08060" opacity="0.8"/><rect x="4" y="279" width="8" height="1.5" fill="#b08060" opacity="0.8"/><rect x="13" y="279" width="5" height="1.5" fill="#6f9a5f" opacity="0.8"/><rect x="19" y="279" width="12" height="1.5" fill="#b08060" opacity="0.8"/><rect x="32" y="279" width="4" height="1.5" fill="#6f9fc8" opacity="0.8"/><rect x="4" y="281" width="12" height="1.5" fill="#b08060" opacity="0.8"/><rect x="17" y="281" width="13" height="1.5" fill="#6f9fc8" opacity="0.8"/><rect x="31" y="281" width="3" height="1.5" fill="#6f9a5f" opacity="0.8"/><rect x="6" y="283" width="9" height="1.5" fill="#b8b890" opacity="0.8"/><rect x="6" y="285" width="6" height="1.5" fill="#b8b890" opacity="0.8"/><rect x="13" y="285" width="4" height="1.5" fill="#6f9fc8" opacity="0.8"/><rect x="4" y="289" width="13" height="1.5" fill="#6f9fc8" opacity="0.8"/><rect x="18" y="289" width="5" height="1.5" fill="#6f9fc8" opacity="0.8"/><rect x="24" y="289" width="3" height="1.5" fill="#6f9fc8" opacity="0.8"/><rect x="4" y="291" width="10" height="1.5" fill="#6f9fc8" opacity="0.8"/><rect x="14" y="291" width="3" height="1.5" fill="#b8b890" opacity="0.8"/><rect x="18" y="291" width="5" height="1.5" fill="#b8b890" opacity="0.8"/><rect x="6" y="293" width="11" height="1.5" fill="#b8b890" opacity="0.8"/><rect x="18" y="293" width="11" height="1.5" fill="#b8b890" opacity="0.8"/><rect x="29" y="293" width="12" height="1.5" fill="#b8b890" opacity="0.8"/><rect x="41" y="293" width="1" height="1.5" fill="#6f9fc8" opacity="0.8"/><rect x="6" y="295" width="7" height="1.5" fill="#6f9fc8" opacity="0.8"/><rect x="14" y="295" width="6" height="1.5" fill="#b8b890" opacity="0.8"/><rect x="21" y="295" width="4" height="1.5" fill="#b08060" opacity="0.8"/><rect x="26" y="295" width="10" height="1.5" fill="#6f9fc8" opacity="0.8"/><rect x="37" y="295" width="2" height="1.5" fill="#b8b890" opacity="0.8"/><rect x="6" y="297" width="4" height="1.5" fill="#6f9fc8" opacity="0.8"/><rect x="10" y="297" width="8" height="1.5" fill="#b8b890" opacity="0.8"/><rect x="18" y="297" width="8" height="1.5" fill="#6f9fc8" opacity="0.8"/><rect x="27" y="297" width="4" height="1.5" fill="#b08060" opacity="0.8"/><rect x="32" y="297" width="8" height="1.5" fill="#b8b890" opacity="0.8"/><rect x="8" y="299" width="3" height="1.5" fill="#6f9fc8" opacity="0.8"/><rect x="12" y="299" width="4" height="1.5" fill="#6f9fc8" opacity="0.8"/><rect x="17" y="299" width="7" height="1.5" fill="#6f9fc8" opacity="0.8"/><rect x="25" y="299" width="6" height="1.5" fill="#b8b890" opacity="0.8"/><rect x="32" y="299" width="5" height="1.5" fill="#6f9fc8" opacity="0.8"/><rect x="38" y="299" width="1" height="1.5" fill="#b8b890" opacity="0.8"/><rect x="6" y="301" width="9" height="1.5" fill="#b08060" opacity="0.8"/><rect x="15" y="301" width="4" height="1.5" fill="#6f9fc8" opacity="0.8"/><rect x="20" y="301" width="7" height="1.5" fill="#b08060" opacity="0.8"/><rect x="28" y="301" width="5" height="1.5" fill="#b08060" opacity="0.8"/><rect x="34" y="301" width="5" height="1.5" fill="#b8b890" opacity="0.8"/><rect x="40" y="301" width="3" height="1.5" fill="#b8b890" opacity="0.8"/><rect x="4" y="303" width="4" height="1.5" fill="#6f9a5f" opacity="0.8"/><rect x="2" y="305" width="7" height="1.5" fill="#4f7fb8" opacity="0.8"/><rect x="2" y="307" width="7" height="1.5" fill="#4f7fb8" opacity="0.8"/><rect x="4" y="309" width="10" height="1.5" fill="#4f7fb8" opacity="0.8"/><rect x="6" y="311" width="11" height="1.5" fill="#b8b890" opacity="0.8"/><rect x="17" y="311" width="5" height="1.5" fill="#b08060" opacity="0.8"/><rect x="22" y="311" width="3" height="1.5" fill="#6f9fc8" opacity="0.8"/><rect x="26" y="311" width="9" height="1.5" fill="#b8b890" opacity="0.8"/><rect x="35" y="311" width="3" height="1.5" fill="#b8b890" opacity="0.8"/><rect x="6" y="313" width="7" height="1.5" fill="#6f9fc8" opacity="0.8"/><rect x="13" y="313" width="10" height="1.5" fill="#b8b890" opacity="0.8"/><rect x="24" y="313" width="4" height="1.5" fill="#b8b890" opacity="0.8"/><rect x="28" y="313" width="9" height="1.5" fill="#b08060" opacity="0.8"/><rect x="8" y="315" width="3" height="1.5" fill="#b08060" opacity="0.8"/><rect x="12" y="315" width="3" height="1.5" fill="#b08060" opacity="0.8"/><rect x="15" y="315" width="3" height="1.5" fill="#6f9fc8" opacity="0.8"/><rect x="19" y="315" width="11" height="1.5" fill="#b08060" opacity="0.8"/><rect x="30" y="315" width="6" height="1.5" fill="#b8b890" opacity="0.8"/><rect x="8" y="317" width="5" height="1.5" fill="#6f9fc8" opacity="0.8"/><rect x="14" y="317" width="13" height="1.5" fill="#b8b890" opacity="0.8"/><rect x="28" y="317" width="5" height="1.5" fill="#b8b890" opacity="0.8"/><rect x="33" y="317" width="3" height="1.5" fill="#b8b890" opacity="0.8"/><rect x="6" y="319" width="10" height="1.5" fill="#b8b890" opacity="0.8"/><rect x="17" y="319" width="8" height="1.5" fill="#b08060" opacity="0.8"/><rect x="26" y="319" width="5" height="1.5" fill="#6f9fc8" opacity="0.8"/><rect x="4" y="321" width="7" height="1.5" fill="#4f7fb8" opacity="0.8"/><rect x="12" y="321" width="3" height="1.5" fill="#6f9a5f" opacity="0.8"/><rect x="2" y="323" width="11" height="1.5" fill="#6f9a5f" opacity="0.8"/><rect x="14" y="323" width="2" height="1.5" fill="#6f9a5f" opacity="0.8"/><rect x="6" y="325" width="5" height="1.5" fill="#b08060" opacity="0.8"/><rect x="11" y="325" width="8" height="1.5" fill="#6f9fc8" opacity="0.8"/><rect x="19" y="325" width="6" height="1.5" fill="#b08060" opacity="0.8"/><rect x="26" y="325" width="11" height="1.5" fill="#b08060" opacity="0.8"/><rect x="38" y="325" width="1" height="1.5" fill="#b08060" opacity="0.8"/><rect x="6" y="327" width="6" height="1.5" fill="#b8b890" opacity="0.8"/><rect x="12" y="327" width="12" height="1.5" fill="#6f9fc8" opacity="0.8"/><rect x="25" y="327" width="8" height="1.5" fill="#6f9fc8" opacity="0.8"/><rect x="34" y="327" width="1" height="1.5" fill="#b8b890" opacity="0.8"/><rect x="6" y="329" width="8" height="1.5" fill="#6f9fc8" opacity="0.8"/><rect x="14" y="329" width="3" height="1.5" fill="#b8b890" opacity="0.8"/><rect x="18" y="329" width="6" height="1.5" fill="#6f9fc8" opacity="0.8"/><rect x="25" y="329" width="10" height="1.5" fill="#b8b890" opacity="0.8"/><rect x="36" y="329" width="1" height="1.5" fill="#b8b890" opacity="0.8"/><rect x="8" y="331" width="13" height="1.5" fill="#6f9fc8" opacity="0.8"/><rect x="22" y="331" width="6" height="1.5" fill="#b8b890" opacity="0.8"/><rect x="29" y="331" width="7" height="1.5" fill="#b08060" opacity="0.8"/><rect x="6" y="333" width="6" height="1.5" fill="#6f9fc8" opacity="0.8"/><rect x="13" y="333" width="5" height="1.5" fill="#b08060" opacity="0.8"/><rect x="18" y="333" width="13" height="1.5" fill="#b08060" opacity="0.8"/><rect x="32" y="333" width="7" height="1.5" fill="#6f9fc8" opacity="0.8"/><rect x="4" y="335" width="9" height="1.5" fill="#4f7fb8" opacity="0.8"/><rect x="14" y="335" width="11" height="1.5" fill="#4f7fb8" opacity="0.8"/><rect x="2" y="337" width="7" height="1.5" fill="#4f7fb8" opacity="0.8"/><rect x="10" y="337" width="9" height="1.5" fill="#4f7fb8" opacity="0.8"/><rect x="19" y="337" width="6" height="1.5" fill="#6f9a5f" opacity="0.8"/><rect x="2" y="339" width="8" height="1.5" fill="#6f9a5f" opacity="0.8"/><rect x="11" y="339" width="8" height="1.5" fill="#4f7fb8" opacity="0.8"/><rect x="20" y="339" width="9" height="1.5" fill="#6f9a5f" opacity="0.8"/><rect x="4" y="341" width="7" height="1.5" fill="#4f7fb8" opacity="0.8"/><rect x="11" y="341" width="4" height="1.5" fill="#4f7fb8" opacity="0.8"/><rect x="16" y="341" width="6" height="1.5" fill="#4f7fb8" opacity="0.8"/><rect x="6" y="343" width="3" height="1.5" fill="#b8b890" opacity="0.8"/><rect x="10" y="343" width="8" height="1.5" fill="#b8b890" opacity="0.8"/><rect x="19" y="343" width="12" height="1.5" fill="#b8b890" opacity="0.8"/><rect x="31" y="343" width="5" height="1.5" fill="#b08060" opacity="0.8"/><rect x="8" y="345" width="4" height="1.5" fill="#b8b890" opacity="0.8"/><rect x="12" y="345" width="4" height="1.5" fill="#b8b890" opacity="0.8"/><rect x="17" y="345" width="5" height="1.5" fill="#b08060" opacity="0.8"/><rect x="23" y="345" width="6" height="1.5" fill="#6f9fc8" opacity="0.8"/><rect x="30" y="345" width="4" height="1.5" fill="#6f9fc8" opacity="0.8"/><rect x="35" y="345" width="4" height="1.5" fill="#6f9fc8" opacity="0.8"/><rect x="6" y="347" width="3" height="1.5" fill="#6f9fc8" opacity="0.8"/><rect x="10" y="347" width="11" height="1.5" fill="#6f9fc8" opacity="0.8"/><rect x="22" y="347" width="12" height="1.5" fill="#b08060" opacity="0.8"/><rect x="6" y="349" width="12" height="1.5" fill="#b8b890" opacity="0.8"/><rect x="19" y="349" width="4" height="1.5" fill="#6f9fc8" opacity="0.8"/><rect x="23" y="349" width="11" height="1.5" fill="#b8b890" opacity="0.8"/><rect x="35" y="349" width="3" height="1.5" fill="#b08060" opacity="0.8"/><rect x="6" y="351" width="5" height="1.5" fill="#b08060" opacity="0.8"/><rect x="12" y="351" width="13" height="1.5" fill="#b8b890" opacity="0.8"/><rect x="25" y="351" width="13" height="1.5" fill="#6f9fc8" opacity="0.8"/><rect x="39" y="351" width="1" height="1.5" fill="#b8b890" opacity="0.8"/><rect x="8" y="353" width="10" height="1.5" fill="#b08060" opacity="0.8"/><rect x="19" y="353" width="10" height="1.5" fill="#b8b890" opacity="0.8"/><rect x="29" y="353" width="8" height="1.5" fill="#b8b890" opacity="0.8"/><rect x="38" y="353" width="2" height="1.5" fill="#b8b890" opacity="0.8"/><rect x="0" y="355" width="3" height="1.5" fill="#b8b890" opacity="0.8"/><rect x="4" y="355" width="9" height="1.5" fill="#b8b890" opacity="0.8"/><rect x="2" y="357" width="9" height="1.5" fill="#b8b890" opacity="0.8"/><rect x="12" y="357" width="3" height="1.5" fill="#b8b890" opacity="0.8"/><rect x="0" y="361" width="11" height="1.5" fill="#b8b890" opacity="0.8"/><rect x="11" y="361" width="4" height="1.5" fill="#b8b890" opacity="0.8"/><rect x="2" y="363" width="6" height="1.5" fill="#b8b890" opacity="0.8"/><rect x="8" y="363" width="6" height="1.5" fill="#6f9fc8" opacity="0.8"/><rect x="15" y="363" width="13" height="1.5" fill="#b8b890" opacity="0.8"/><rect x="29" y="363" width="3" height="1.5" fill="#b8b890" opacity="0.8"/><rect x="33" y="363" width="9" height="1.5" fill="#6f9fc8" opacity="0.8"/><rect x="43" y="363" width="8" height="1.5" fill="#6f9fc8" opacity="0.8"/><rect x="52" y="363" width="2" height="1.5" fill="#6f9fc8" opacity="0.8"/><rect x="4" y="365" width="3" height="1.5" fill="#6f9fc8" opacity="0.8"/><rect x="8" y="365" width="8" height="1.5" fill="#b8b890" opacity="0.8"/><rect x="17" y="365" width="10" height="1.5" fill="#b8b890" opacity="0.8"/><rect x="27" y="365" width="10" height="1.5" fill="#6f9fc8" opacity="0.8"/><rect x="38" y="365" width="4" height="1.5" fill="#6f9fc8" opacity="0.8"/><rect x="2" y="367" width="4" height="1.5" fill="#6f9fc8" opacity="0.8"/><rect x="7" y="367" width="8" height="1.5" fill="#6f9fc8" opacity="0.8"/><rect x="15" y="367" width="10" height="1.5" fill="#6f9fc8" opacity="0.8"/><rect x="26" y="367" width="6" height="1.5" fill="#b8b890" opacity="0.8"/><rect x="32" y="367" width="6" height="1.5" fill="#b8b890" opacity="0.8"/><rect x="39" y="367" width="4" height="1.5" fill="#6f9fc8" opacity="0.8"/><rect x="43" y="367" width="6" height="1.5" fill="#b8b890" opacity="0.8"/><rect x="50" y="367" width="7" height="1.5" fill="#6f9fc8" opacity="0.8"/><rect x="58" y="367" width="8" height="1.5" fill="#b8b890" opacity="0.8"/><rect x="2" y="369" width="6" height="1.5" fill="#6f9fc8" opacity="0.8"/><rect x="9" y="369" width="12" height="1.5" fill="#b8b890" opacity="0.8"/><rect x="22" y="369" width="10" height="1.5" fill="#6f9fc8" opacity="0.8"/><rect x="33" y="369" width="7" height="1.5" fill="#b8b890" opacity="0.8"/><rect x="40" y="369" width="1" height="1.5" fill="#6f9fc8" opacity="0.8"/><rect x="2" y="371" width="5" height="1.5" fill="#b8b890" opacity="0.8"/><rect x="8" y="371" width="5" height="1.5" fill="#b8b890" opacity="0.8"/><rect x="14" y="371" width="4" height="1.5" fill="#b8b890" opacity="0.8"/><rect x="19" y="371" width="6" height="1.5" fill="#b8b890" opacity="0.8"/><rect x="26" y="371" width="11" height="1.5" fill="#b8b890" opacity="0.8"/><rect x="37" y="371" width="2" height="1.5" fill="#6f9fc8" opacity="0.8"/><rect x="8" y="373" width="5" height="1.5" fill="#b8b890" opacity="0.8"/><rect x="14" y="373" width="5" height="1.5" fill="#6f9fc8" opacity="0.8"/><rect x="20" y="373" width="1" height="1.5" fill="#6f9fc8" opacity="0.8"/><rect x="8" y="377" width="3" height="1.5" fill="#b8b890" opacity="0.8"/><rect x="11" y="377" width="13" height="1.5" fill="#b8b890" opacity="0.8"/><rect x="24" y="377" width="4" height="1.5" fill="#6f9fc8" opacity="0.8"/><rect x="10" y="381" width="13" height="1.5" fill="#6f9fc8" opacity="0.8"/><rect x="24" y="381" width="7" height="1.5" fill="#b8b890" opacity="0.8"/><rect x="10" y="385" width="4" height="1.5" fill="#a0a0a0" opacity="0.8"/><rect x="14" y="385" width="10" height="1.5" fill="#a0a0a0" opacity="0.8"/><rect x="25" y="385" width="8" height="1.5" fill="#a0a0a0" opacity="0.8"/><rect x="34" y="385" width="7" height="1.5" fill="#a0a0a0" opacity="0.8"/><rect x="10" y="387" width="9" height="1.5" fill="#a0a0a0" opacity="0.8"/><rect x="19" y="387" width="12" height="1.5" fill="#a0a0a0" opacity="0.8"/><rect x="32" y="387" width="13" height="1.5" fill="#a0a0a0" opacity="0.8"/><rect x="10" y="389" width="7" height="1.5" fill="#6f9fc8" opacity="0.8"/><rect x="17" y="389" width="8" height="1.5" fill="#b8b890" opacity="0.8"/><rect x="26" y="389" width="8" height="1.5" fill="#a0a0a0" opacity="0.8"/><rect x="35" y="389" width="6" height="1.5" fill="#6f9fc8" opacity="0.8"/><rect x="42" y="389" width="1" height="1.5" fill="#b8b890" opacity="0.8"/><rect x="10" y="391" width="4" height="1.5" fill="#6f9fc8" opacity="0.8"/><rect x="15" y="391" width="12" height="1.5" fill="#6f9fc8" opacity="0.8"/><rect x="27" y="391" width="9" height="1.5" fill="#a0a0a0" opacity="0.8"/><rect x="12" y="393" width="7" height="1.5" fill="#a0a0a0" opacity="0.8"/><rect x="20" y="393" width="4" height="1.5" fill="#b8b890" opacity="0.8"/><rect x="25" y="393" width="9" height="1.5" fill="#b8b890" opacity="0.8"/><rect x="35" y="393" width="6" height="1.5" fill="#a0a0a0" opacity="0.8"/><rect x="41" y="393" width="5" height="1.5" fill="#6f9fc8" opacity="0.8"/><rect x="47" y="393" width="1" height="1.5" fill="#6f9fc8" opacity="0.8"/><rect x="10" y="395" width="10" height="1.5" fill="#b8b890" opacity="0.8"/><rect x="21" y="395" width="9" height="1.5" fill="#a0a0a0" opacity="0.8"/><rect x="30" y="395" width="5" height="1.5" fill="#a0a0a0" opacity="0.8"/><rect x="12" y="399" width="4" height="1.5" fill="#b8b890" opacity="0.8"/><rect x="16" y="399" width="11" height="1.5" fill="#b8b890" opacity="0.8"/><rect x="27" y="399" width="3" height="1.5" fill="#b8b890" opacity="0.8"/><rect x="31" y="399" width="1" height="1.5" fill="#6f9fc8" opacity="0.8"/><rect x="10" y="401" width="8" height="1.5" fill="#b8b890" opacity="0.8"/><rect x="18" y="401" width="6" height="1.5" fill="#b8b890" opacity="0.8"/><rect x="25" y="401" width="3" height="1.5" fill="#b8b890" opacity="0.8"/><rect x="28" y="401" width="10" height="1.5" fill="#6f9fc8" opacity="0.8"/><rect x="39" y="401" width="1" height="1.5" fill="#b8b890" opacity="0.8"/><rect x="12" y="403" width="11" height="1.5" fill="#b8b890" opacity="0.8"/><rect x="23" y="403" width="1" height="1.5" fill="#6f9fc8" opacity="0.8"/><rect x="10" y="405" width="13" height="1.5" fill="#6f9fc8" opacity="0.8"/><rect x="24" y="405" width="9" height="1.5" fill="#b8b890" opacity="0.8"/><rect x="34" y="405" width="8" height="1.5" fill="#6f9fc8" opacity="0.8"/><rect x="12" y="407" width="5" height="1.5" fill="#6f9fc8" opacity="0.8"/><rect x="18" y="407" width="3" height="1.5" fill="#6f9fc8" opacity="0.8"/><rect x="4" y="409" width="7" height="1.5" fill="#b8b890" opacity="0.8"/><rect x="4" y="411" width="3" height="1.5" fill="#b8b890" opacity="0.8"/><rect x="-9" y="185" width="82" height="2" fill="#2f6fb0" opacity="0.8"/><rect x="-9" y="265" width="82" height="2" fill="#2f7fd0"/><rect x="-9" y="401" width="82" height="2" fill="#2f7fd0"/><rect x="-9" y="405" width="82" height="2" fill="#2f7fd0"/></svg><div class="ab" style="left:1049px;top:91px;width:1px;height:416px;background:#2b2b2b;"></div><div class="ab" style="left:1059px;top:94.5px;width:4px;height:6.5px;background:#3b8eea;"></div><div class="ab" style="left:1059px;top:107.5px;width:4px;height:27.0px;background:#3b8eea;"></div><div class="ab" style="left:1059px;top:139px;width:4px;height:6.5px;background:#3b8eea;"></div><div class="ab" style="left:1059px;top:150px;width:4px;height:6px;background:#3b8eea;"></div><div class="ab" style="left:1059px;top:305.5px;width:4px;height:5.5px;background:#3b8eea;"></div><div class="ab" style="left:1059px;top:334px;width:4px;height:5px;background:#3b8eea;"></div><div class="ab" style="left:1059px;top:384px;width:4px;height:5px;background:#3b8eea;"></div><div class="ab" style="left:1059px;top:404.5px;width:4px;height:6.0px;background:#3b8eea;"></div><div class="ab" style="left:1050px;top:321px;width:13px;height:2px;background:#a0a0a0;"></div><div class="ab" style="left:0px;top:506px;width:1063px;height:1px;background:#2b2b2b;"></div><div class="ab" style="left:0px;top:507px;width:34px;height:21px;background:#0078d4;"></div><svg class="ab" style="left:9px;top:510px" width="15" height="14"><path d="M2 12L6 8L2 4M13 2L9 6L13 10" stroke="#ffffff" stroke-width="1.3" fill="none"/></svg><svg class="ab" style="left:43px;top:510.5px" width="13" height="13"><circle cx="6.5" cy="6.5" r="5.8" stroke="#ccc" stroke-width="1.1" fill="none"/><path d="M4 4L9 9M9 4L4 9" stroke="#ccc" stroke-width="1.1"/></svg><div class="t" style="left:59px;top:511px;font:12px 'Liberation Sans',sans-serif;color:#cccccc;">0</div><svg class="ab" style="left:68.5px;top:510px" width="14" height="13"><path d="M7 1L13.3 12.3H0.7Z" stroke="#ccc" stroke-width="1.1" fill="none" stroke-linejoin="round"/><path d="M7 4.5V8.5M7 9.8V11" stroke="#ccc" stroke-width="1.1"/></svg><div class="t" style="left:84px;top:511px;font:12px 'Liberation Sans',sans-serif;color:#cccccc;">0</div><svg class="ab" style="left:95px;top:510.5px" width="13" height="13"><circle cx="6.5" cy="6.5" r="5.8" stroke="#ccc" stroke-width="1.1" fill="none"/><path d="M6.5 5.5V10M6.5 3.2V4.4" stroke="#ccc" stroke-width="1.2"/></svg><div class="t" style="left:111px;top:511px;font:12px 'Liberation Sans',sans-serif;color:#cccccc;">82</div><div class="t" style="left:691px;top:511.5px;font:11.5px 'Liberation Sans',sans-serif;color:#cccccc;letter-spacing:-0.2px">Ln 322, Col 1</div><div class="t" style="left:776px;top:511.5px;font:11.5px 'Liberation Sans',sans-serif;color:#cccccc;letter-spacing:-0.2px">Spaces: 4</div><div class="t" style="left:841px;top:511.5px;font:11.5px 'Liberation Sans',sans-serif;color:#cccccc;letter-spacing:-0.2px">UTF-8</div><div class="t" style="left:888px;top:511.5px;font:11.5px 'Liberation Sans',sans-serif;color:#cccccc;letter-spacing:-0.2px">LF</div><div class="t" style="left:917px;top:511.5px;font:11.5px 'Liberation Sans',sans-serif;color:#cccccc;letter-spacing:-0.2px">{ }</div><div class="t" style="left:935px;top:511.5px;font:11.5px 'Liberation Sans',sans-serif;color:#cccccc;letter-spacing:-0.2px">JavaScript</div><svg class="ab" style="left:1004px;top:510.5px" width="15" height="13" viewBox="0 0 16 14"><path d="M2 1.5Q4.5 -0.3 8 1.8Q11.5 -0.3 14 1.5Q15 3 14.2 5.4Q15.6 6.8 15.2 9.2Q14.3 13.3 8 13.3Q1.7 13.3 0.8 9.2Q0.4 6.8 1.8 5.4Q1 3 2 1.5Z" fill="#d8d8d8"/><rect x="3.3" y="2.2" width="3.6" height="3" rx="1" fill="#181818"/><rect x="9.1" y="2.2" width="3.6" height="3" rx="1" fill="#181818"/><path d="M3 8Q8 6.5 13 8V11Q8 12.3 3 11Z" fill="#181818"/><rect x="5.6" y="8" width="1.6" height="2.6" fill="#d8d8d8"/><rect x="8.8" y="8" width="1.6" height="2.6" fill="#d8d8d8"/></svg><svg class="ab" style="left:1035px;top:510px" width="13" height="14"><path d="M6.5 1.2Q10.8 1.2 10.8 6V9.5L12.2 11.5H0.8L2.2 9.5V6Q2.2 1.2 6.5 1.2Z" stroke="#ccc" stroke-width="1.1" fill="none" stroke-linejoin="round"/><path d="M4.8 12.5Q6.5 14.2 8.2 12.5" stroke="#ccc" stroke-width="1.1" fill="none"/></svg>
</div>
</body></html>
